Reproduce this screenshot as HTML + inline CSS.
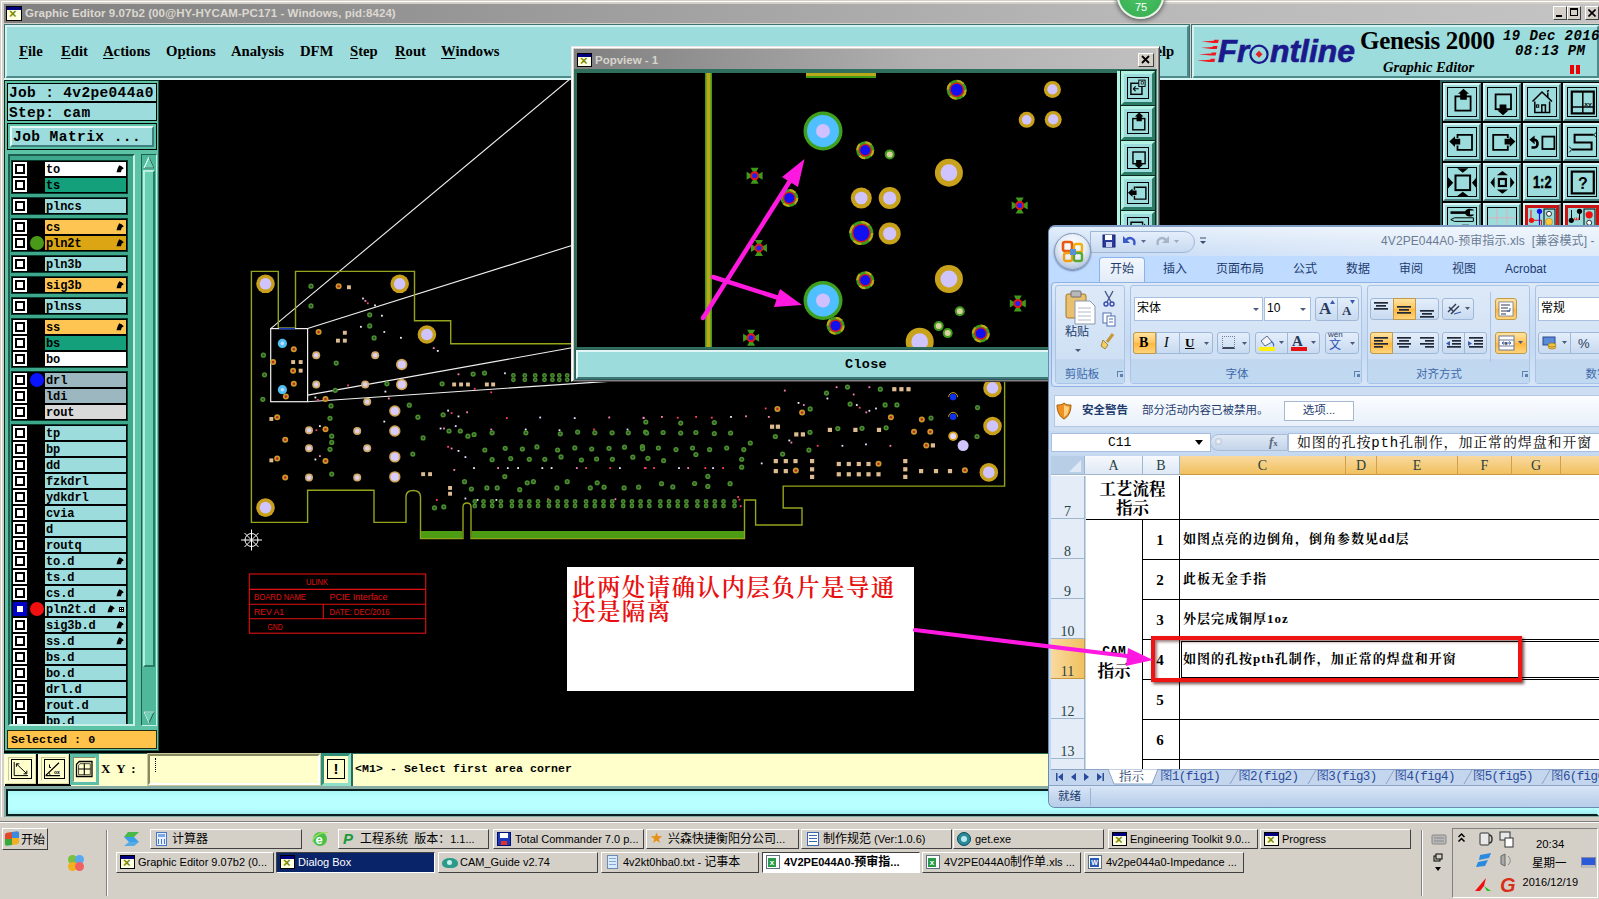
<!DOCTYPE html>
<html><head><meta charset="utf-8"><title>Graphic Editor</title>
<style>
*{box-sizing:border-box;margin:0;padding:0}
html,body{width:1599px;height:899px;overflow:hidden;background:#000}
body{position:relative;font-family:"Liberation Sans","Noto Sans CJK SC",sans-serif;font-size:11px;color:#000}
.a{position:absolute}
.mono{font-family:"Liberation Mono","DejaVu Sans Mono",monospace;font-weight:bold}
.serif{font-family:"Liberation Serif","Noto Serif CJK SC",serif}
.cy{background:#9ddcdc}
.out{border:1px solid;border-color:#e4f7f7 #3f6f6f #3f6f6f #e4f7f7}
.in{border:1px solid;border-color:#3f6f6f #e4f7f7 #e4f7f7 #3f6f6f}
.menu span{position:absolute;top:0.7px;font:bold 14.7px "Liberation Serif",serif;white-space:nowrap}
.menu u{text-decoration:underline;text-underline-offset:2px}
.lay{position:absolute;left:0;width:118px;height:16px}
.lay .cb{position:absolute;left:3px;top:3px;width:10px;height:10px;background:#fff;border:2px solid #000;box-shadow:0 0 0 2px #fff}
.lay .nm{position:absolute;left:33px;top:1px;padding-top:2px;width:81px;height:14px;font:bold 12px/12px "Liberation Mono",monospace;padding-left:1px;white-space:nowrap;overflow:hidden;letter-spacing:-0.1px}
.lay .hd{position:absolute;right:6px;top:4px;width:8px;height:8px}
.tb{position:absolute;height:20px;border:1px solid;border-color:#fff #404040 #404040 #fff;background:#d4d0c8;font:11px/18px "Liberation Sans","Noto Sans CJK SC",sans-serif;white-space:nowrap;overflow:hidden;padding-left:21px}
.tb i{position:absolute;left:3px;top:2px;width:15px;height:14px;display:block}
.gx{background:#ffffe1;border:1px solid #000}
.gx:before{content:"";position:absolute;left:0;top:0;right:0;height:3px;background:#000080}
.gx:after{content:"×";position:absolute;left:2px;top:1px;font:bold 13px/12px "Liberation Sans",sans-serif;color:#7a8a00}
</style></head><body>

<div class="a" style="left:0;top:0;width:1599px;height:822px;background:#d4d0c8"></div>
<div class="a" style="left:1px;top:1px;width:1598px;height:1px;background:#fff"></div><div class="a" style="left:1px;top:1px;width:1px;height:820px;background:#fff"></div>
<div class="a" style="left:4px;top:4px;width:1595px;height:19px;background:linear-gradient(90deg,#808080,#b8b8b8 70%,#c4c4c4)"></div>
<div class="a gx" style="left:6px;top:6px;width:16px;height:15px"></div>
<div class="a" id="ttl" style="left:25px;top:4px;font:bold 11.5px/18px 'Liberation Sans',sans-serif;color:#dcd8d0;white-space:nowrap;letter-spacing:0.05px">Graphic Editor 9.07b2 (00@HY-HYCAM-PC171 - Windows, pid:8424)</div>
<div class="a" style="left:1553px;top:6px;width:14px;height:14px;background:#d4d0c8;border:1px solid;border-color:#fff #404040 #404040 #fff"></div>
<div class="a" style="left:1567px;top:6px;width:14px;height:14px;background:#d4d0c8;border:1px solid;border-color:#fff #404040 #404040 #fff"></div>
<div class="a" style="left:1585px;top:6px;width:14px;height:14px;background:#d4d0c8;border:1px solid;border-color:#fff #404040 #404040 #fff"></div>
<div class="a" style="left:1556px;top:15px;width:6px;height:2px;background:#000"></div>
<div class="a" style="left:1570px;top:8px;width:8px;height:8px;border:1px solid #000;border-top-width:2px"></div>
<svg class="a" style="left:1588px;top:9px" width="8" height="8"><path d="M0.5 0.5L7.5 7.5M7.5 0.5L0.5 7.5" stroke="#000" stroke-width="1.6"/></svg>
<div class="a" style="left:1117px;top:-27px;width:47px;height:46px;border-radius:50%;background:radial-gradient(circle at 50% 40%,#4cc468,#36ac4e);border:2px solid #e8f4e8;box-shadow:0 1px 4px 1px #666"></div>
<div class="a" style="left:1131px;top:0px;width:20px;text-align:center;font:11px/14px 'Liberation Sans',sans-serif;color:#fff">75</div>
<div class="a" style="left:4px;top:24px;width:1186px;height:55px;background:#3f6f6f"></div>
<div class="a cy" style="left:5px;top:25px;width:1184px;height:54px;border:2px solid;border-color:#d4f2f2 #4f8a8a #4f8a8a #d4f2f2;border-bottom-width:3px"></div>
<div class="a menu" style="left:0;top:42px;width:1200px;height:20px">
<span style="left:19px"><u>F</u>ile</span>
<span style="left:61px"><u>E</u>dit</span>
<span style="left:103px"><u>A</u>ctions</span>
<span style="left:166px">O<u>p</u>tions</span>
<span style="left:231px">Analysis</span>
<span style="left:300px">DFM</span>
<span style="left:350px"><u>S</u>tep</span>
<span style="left:395px"><u>R</u>out</span>
<span style="left:441px"><u>W</u>indows</span>
<span style="left:1144px"><u>H</u>elp</span>
</div>
<div class="a" style="left:1191px;top:24px;width:408px;height:55px;background:#3f6f6f"></div>
<div class="a cy" style="left:1192px;top:25px;width:407px;height:54px;border:2px solid;border-color:#d4f2f2 #4f8a8a #4f8a8a #d4f2f2;border-bottom-width:3px"></div>
<svg class="a" style="left:1190px;top:30px" width="175" height="46" viewBox="1190 30 175 46"><path d="M1201.5 41.6L1213.8 40.7L1214.1 39.7L1218.8 39.7L1218.0 42.9L1213.2 42.9Z" fill="#f01820"/><path d="M1201.0 47.8L1212.6 46.9L1212.9 45.9L1217.6 45.9L1216.8 49.1L1212.0 49.1Z" fill="#f01820"/><path d="M1198.5 54.3L1211.4 53.4L1211.7 52.4L1216.4 52.4L1215.6 55.6L1210.8 55.6Z" fill="#f01820"/><path d="M1197.0 60.6L1210.2 59.7L1210.5 58.7L1215.2 58.7L1214.4 61.9L1209.6 61.9Z" fill="#f01820"/><text x="1218" y="62" font-family="Liberation Sans,sans-serif" font-weight="bold" font-style="italic" font-size="31.5" fill="#1a1a8c" stroke="#1a1a8c" stroke-width="0.7" lengthAdjust="spacingAndGlyphs" textLength="31">Fr</text><text x="1270" y="62" font-family="Liberation Sans,sans-serif" font-weight="bold" font-style="italic" font-size="31.5" fill="#1a1a8c" stroke="#1a1a8c" stroke-width="0.7" lengthAdjust="spacingAndGlyphs" textLength="85">ntline</text><circle cx="1259" cy="54.3" r="8.6" fill="none" stroke="#1a1a8c" stroke-width="2.2"/><path d="M1259 50.8L1262.5 54.3L1259 57.8L1255.5 54.3Z" fill="#e8202a"/></svg>
<div class="a" style="left:1360px;top:26px;font:bold 25px/30px 'Liberation Serif',serif;white-space:nowrap;letter-spacing:-0.3px">Genesis 2000</div>
<div class="a" style="left:1383px;top:58px;font:italic bold 14.6px/18px 'Liberation Serif',serif;white-space:nowrap">Graphic Editor</div>
<div class="a" style="left:1503px;top:29px;font:italic bold 14px/15px 'Liberation Mono',monospace;white-space:nowrap;letter-spacing:0.4px">19 Dec 2016</div>
<div class="a" style="left:1515px;top:44px;font:italic bold 14px/15px 'Liberation Mono',monospace;white-space:nowrap;letter-spacing:0.4px">08:13 PM</div>
<div class="a" style="left:1570px;top:65px;width:4px;height:9px;background:#e00"></div><div class="a" style="left:1576px;top:65px;width:4px;height:9px;background:#e00"></div>
<div class="a" style="left:4px;top:78px;width:1595px;height:2px;background:#d8f6f6"></div>
<div class="a" style="left:4px;top:80px;width:1595px;height:674px;background:#000"></div>
<svg class="a" style="left:158px;top:79px" width="1441" height="674" viewBox="158 79 1441 674"><path d="M270.7 328.6L576.0 74.0" stroke="#f0f0f0" stroke-width="1.1"/><path d="M307.6 328.6L1117.0 74.0" stroke="#f0f0f0" stroke-width="1.1"/><path d="M307.6 395.1L576.0 347.0" stroke="#f0f0f0" stroke-width="1.1"/><path d="M307.6 401.7L1117.0 347.0" stroke="#f0f0f0" stroke-width="1.1"/><path d="M251.4 271.4H278.3V328H295.5V271.4H414.5V320.7H450.7V343.8H1004.6V486.1H783.2V508H802V525H755.6V500H744.5V538.5H471V507Q471 503 467 503Q463 503 463 507V538.5H420.5V497Q420.5 490.5 413 490.5Q406 490.5 406 497V522.4H374V490.3H307.6V522.4H251.4Z" fill="none" stroke="#96a41c" stroke-width="1.4"/><rect x="421" y="531" width="41.5" height="7" fill="#4c9c14"/><rect x="471.5" y="531" width="272.5" height="7" fill="#4c9c14"/><circle cx="265.5" cy="283.8" r="9.3" fill="#c8a01c"/><circle cx="265.5" cy="283.8" r="5.8" fill="#d0c4ff"/><circle cx="399.7" cy="283.8" r="9.3" fill="#c8a01c"/><circle cx="399.7" cy="283.8" r="5.8" fill="#d0c4ff"/><circle cx="426.9" cy="334.5" r="9.3" fill="#c8a01c"/><circle cx="426.9" cy="334.5" r="5.8" fill="#d0c4ff"/><circle cx="265.5" cy="507.6" r="9.3" fill="#c8a01c"/><circle cx="265.5" cy="507.6" r="5.8" fill="#d0c4ff"/><circle cx="992.5" cy="387.9" r="9.3" fill="#c8a01c"/><circle cx="992.5" cy="387.9" r="5.8" fill="#d0c4ff"/><circle cx="992.5" cy="426.0" r="9.3" fill="#c8a01c"/><circle cx="992.5" cy="426.0" r="5.8" fill="#d0c4ff"/><circle cx="988.8" cy="472.4" r="9.3" fill="#c8a01c"/><circle cx="988.8" cy="472.4" r="5.8" fill="#d0c4ff"/><circle cx="401.7" cy="364.5" r="5.7" fill="#d0a450"/><circle cx="401.7" cy="364.5" r="4.1" fill="#d8ccff"/><circle cx="401.7" cy="384.5" r="5.7" fill="#d0a450"/><circle cx="401.7" cy="384.5" r="4.1" fill="#d8ccff"/><circle cx="394.8" cy="411.0" r="5.7" fill="#d0a450"/><circle cx="394.8" cy="411.0" r="4.1" fill="#d8ccff"/><circle cx="394.8" cy="431.0" r="5.7" fill="#d0a450"/><circle cx="394.8" cy="431.0" r="4.1" fill="#d8ccff"/><circle cx="394.8" cy="456.9" r="5.7" fill="#d0a450"/><circle cx="394.8" cy="456.9" r="4.1" fill="#d8ccff"/><circle cx="394.8" cy="476.9" r="5.7" fill="#d0a450"/><circle cx="394.8" cy="476.9" r="4.1" fill="#d8ccff"/><circle cx="316.2" cy="355.2" r="4.0" fill="#d0aa68"/><circle cx="316.2" cy="355.2" r="2.3" fill="#dcd0f0"/><circle cx="375.2" cy="355.2" r="4.0" fill="#d0aa68"/><circle cx="375.2" cy="355.2" r="2.3" fill="#dcd0f0"/><circle cx="316.2" cy="384.5" r="4.0" fill="#d0aa68"/><circle cx="316.2" cy="384.5" r="2.3" fill="#dcd0f0"/><circle cx="365.2" cy="384.5" r="4.0" fill="#d0aa68"/><circle cx="365.2" cy="384.5" r="2.3" fill="#dcd0f0"/><circle cx="309.0" cy="430.3" r="4.0" fill="#d0aa68"/><circle cx="309.0" cy="430.3" r="2.3" fill="#dcd0f0"/><circle cx="357.2" cy="431.0" r="4.0" fill="#d0aa68"/><circle cx="357.2" cy="431.0" r="2.3" fill="#dcd0f0"/><circle cx="309.0" cy="448.3" r="4.0" fill="#d0aa68"/><circle cx="309.0" cy="448.3" r="2.3" fill="#dcd0f0"/><circle cx="367.2" cy="448.3" r="4.0" fill="#d0aa68"/><circle cx="367.2" cy="448.3" r="2.3" fill="#dcd0f0"/><circle cx="309.0" cy="477.6" r="4.0" fill="#d0aa68"/><circle cx="309.0" cy="477.6" r="2.3" fill="#dcd0f0"/><circle cx="357.2" cy="477.6" r="4.0" fill="#d0aa68"/><circle cx="357.2" cy="477.6" r="2.3" fill="#dcd0f0"/><circle cx="367.2" cy="401.7" r="4.0" fill="#d0aa68"/><circle cx="367.2" cy="401.7" r="2.3" fill="#dcd0f0"/><circle cx="953.1" cy="436.2" r="4.0" fill="#d0aa68"/><circle cx="953.1" cy="436.2" r="2.3" fill="#dcd0f0"/><circle cx="963.1" cy="445.6" r="5.5" fill="#d0c4ff"/><rect x="270.7" y="328.6" width="36.9" height="73.1" fill="none" stroke="#f0f0f0" stroke-width="1.2"/><path d="M279 328.6H295" stroke="#1a3ac0" stroke-width="1.5"/><circle cx="282.4" cy="343.4" r="4.6" fill="#4fc0f0"/><circle cx="282.4" cy="343.4" r="1.8" fill="#c8d8ff"/><circle cx="282.4" cy="389.7" r="4.6" fill="#4fc0f0"/><circle cx="282.4" cy="389.7" r="1.8" fill="#c8d8ff"/><circle cx="311.0" cy="286.2" r="2.6" fill="#4a8f2a"/><circle cx="311.0" cy="286.2" r="1.1" fill="#2a4a30"/><circle cx="311.0" cy="305.9" r="2.6" fill="#4a8f2a"/><circle cx="311.0" cy="305.9" r="1.1" fill="#2a4a30"/><circle cx="369.7" cy="314.8" r="2.6" fill="#4a8f2a"/><circle cx="369.7" cy="314.8" r="1.1" fill="#2a4a30"/><circle cx="369.7" cy="325.9" r="2.6" fill="#4a8f2a"/><circle cx="369.7" cy="325.9" r="1.1" fill="#2a4a30"/><circle cx="374.1" cy="337.9" r="2.6" fill="#4a8f2a"/><circle cx="374.1" cy="337.9" r="1.1" fill="#2a4a30"/><circle cx="336.2" cy="363.1" r="2.6" fill="#4a8f2a"/><circle cx="336.2" cy="363.1" r="1.1" fill="#2a4a30"/><circle cx="263.4" cy="355.2" r="2.6" fill="#4a8f2a"/><circle cx="263.4" cy="355.2" r="1.1" fill="#2a4a30"/><circle cx="264.5" cy="374.8" r="2.6" fill="#4a8f2a"/><circle cx="264.5" cy="374.8" r="1.1" fill="#2a4a30"/><circle cx="262.8" cy="399.3" r="2.6" fill="#4a8f2a"/><circle cx="262.8" cy="399.3" r="1.1" fill="#2a4a30"/><circle cx="335.2" cy="390.3" r="2.6" fill="#4a8f2a"/><circle cx="335.2" cy="390.3" r="1.1" fill="#2a4a30"/><circle cx="331.0" cy="405.9" r="2.6" fill="#4a8f2a"/><circle cx="331.0" cy="405.9" r="1.1" fill="#2a4a30"/><circle cx="330.0" cy="418.3" r="2.6" fill="#4a8f2a"/><circle cx="330.0" cy="418.3" r="1.1" fill="#2a4a30"/><circle cx="331.7" cy="436.2" r="2.6" fill="#4a8f2a"/><circle cx="331.7" cy="436.2" r="1.1" fill="#2a4a30"/><circle cx="331.7" cy="442.4" r="2.6" fill="#4a8f2a"/><circle cx="331.7" cy="442.4" r="1.1" fill="#2a4a30"/><circle cx="330.0" cy="449.3" r="2.6" fill="#4a8f2a"/><circle cx="330.0" cy="449.3" r="1.1" fill="#2a4a30"/><circle cx="331.7" cy="474.1" r="2.6" fill="#4a8f2a"/><circle cx="331.7" cy="474.1" r="1.1" fill="#2a4a30"/><circle cx="386.9" cy="383.8" r="2.6" fill="#4a8f2a"/><circle cx="386.9" cy="383.8" r="1.1" fill="#2a4a30"/><circle cx="409.3" cy="405.2" r="2.6" fill="#4a8f2a"/><circle cx="409.3" cy="405.2" r="1.1" fill="#2a4a30"/><circle cx="417.9" cy="417.2" r="2.6" fill="#4a8f2a"/><circle cx="417.9" cy="417.2" r="1.1" fill="#2a4a30"/><circle cx="423.1" cy="437.9" r="2.6" fill="#4a8f2a"/><circle cx="423.1" cy="437.9" r="1.1" fill="#2a4a30"/><circle cx="412.8" cy="454.1" r="2.6" fill="#4a8f2a"/><circle cx="412.8" cy="454.1" r="1.1" fill="#2a4a30"/><circle cx="442.1" cy="383.8" r="2.6" fill="#4a8f2a"/><circle cx="442.1" cy="383.8" r="1.1" fill="#2a4a30"/><circle cx="443.1" cy="414.8" r="2.6" fill="#4a8f2a"/><circle cx="443.1" cy="414.8" r="1.1" fill="#2a4a30"/><circle cx="449.0" cy="431.0" r="2.6" fill="#4a8f2a"/><circle cx="449.0" cy="431.0" r="1.1" fill="#2a4a30"/><circle cx="460.3" cy="431.0" r="2.6" fill="#4a8f2a"/><circle cx="460.3" cy="431.0" r="1.1" fill="#2a4a30"/><circle cx="467.9" cy="436.2" r="2.6" fill="#4a8f2a"/><circle cx="467.9" cy="436.2" r="1.1" fill="#2a4a30"/><circle cx="474.1" cy="434.5" r="2.6" fill="#4a8f2a"/><circle cx="474.1" cy="434.5" r="1.1" fill="#2a4a30"/><circle cx="473.1" cy="374.1" r="2.6" fill="#4a8f2a"/><circle cx="473.1" cy="374.1" r="1.1" fill="#2a4a30"/><circle cx="484.5" cy="373.1" r="2.6" fill="#4a8f2a"/><circle cx="484.5" cy="373.1" r="1.1" fill="#2a4a30"/><circle cx="464.5" cy="481.7" r="2.6" fill="#4a8f2a"/><circle cx="464.5" cy="481.7" r="1.1" fill="#2a4a30"/><circle cx="471.4" cy="489.0" r="2.6" fill="#4a8f2a"/><circle cx="471.4" cy="489.0" r="1.1" fill="#2a4a30"/><circle cx="486.9" cy="487.9" r="2.6" fill="#4a8f2a"/><circle cx="486.9" cy="487.9" r="1.1" fill="#2a4a30"/><circle cx="497.2" cy="487.9" r="2.6" fill="#4a8f2a"/><circle cx="497.2" cy="487.9" r="1.1" fill="#2a4a30"/><circle cx="504.8" cy="476.6" r="2.6" fill="#4a8f2a"/><circle cx="504.8" cy="476.6" r="1.1" fill="#2a4a30"/><circle cx="434.5" cy="507.9" r="2.6" fill="#4a8f2a"/><circle cx="434.5" cy="507.9" r="1.1" fill="#2a4a30"/><circle cx="443.8" cy="506.9" r="2.6" fill="#4a8f2a"/><circle cx="443.8" cy="506.9" r="1.1" fill="#2a4a30"/><circle cx="338.6" cy="286.2" r="3" fill="#c89a28"/><circle cx="338.6" cy="286.2" r="1.3" fill="#c02828"/><circle cx="318.6" cy="332.1" r="3" fill="#c89a28"/><circle cx="318.6" cy="332.1" r="1.3" fill="#c02828"/><circle cx="293.8" cy="349.3" r="3" fill="#c89a28"/><circle cx="293.8" cy="349.3" r="1.3" fill="#c02828"/><circle cx="273.1" cy="362.1" r="3" fill="#c89a28"/><circle cx="273.1" cy="362.1" r="1.3" fill="#c02828"/><circle cx="293.1" cy="370.7" r="3" fill="#c89a28"/><circle cx="293.1" cy="370.7" r="1.3" fill="#c02828"/><circle cx="293.8" cy="383.8" r="3" fill="#c89a28"/><circle cx="293.8" cy="383.8" r="1.3" fill="#c02828"/><circle cx="285.9" cy="396.6" r="3" fill="#c89a28"/><circle cx="285.9" cy="396.6" r="1.3" fill="#c02828"/><circle cx="277.2" cy="417.2" r="3" fill="#c89a28"/><circle cx="277.2" cy="417.2" r="1.3" fill="#c02828"/><circle cx="325.5" cy="399.0" r="3" fill="#c89a28"/><circle cx="325.5" cy="399.0" r="1.3" fill="#c02828"/><circle cx="325.5" cy="429.3" r="3" fill="#c89a28"/><circle cx="325.5" cy="429.3" r="1.3" fill="#c02828"/><circle cx="285.2" cy="439.7" r="3" fill="#c89a28"/><circle cx="285.2" cy="439.7" r="1.3" fill="#c02828"/><circle cx="277.2" cy="458.6" r="3" fill="#c89a28"/><circle cx="277.2" cy="458.6" r="1.3" fill="#c02828"/><circle cx="325.5" cy="461.0" r="3" fill="#c89a28"/><circle cx="325.5" cy="461.0" r="1.3" fill="#c02828"/><circle cx="285.2" cy="477.6" r="3" fill="#c89a28"/><circle cx="285.2" cy="477.6" r="1.3" fill="#c02828"/><rect x="347.0" y="285.3" width="3.9" height="3.9" fill="#dcbc90"/><rect x="342.9" y="330.8" width="3.9" height="3.9" fill="#dcbc90"/><rect x="336.0" y="338.7" width="3.9" height="3.9" fill="#dcbc90"/><rect x="342.9" y="338.7" width="3.9" height="3.9" fill="#dcbc90"/><rect x="291.2" y="360.1" width="3.9" height="3.9" fill="#dcbc90"/><rect x="298.7" y="360.1" width="3.9" height="3.9" fill="#dcbc90"/><rect x="298.7" y="368.7" width="3.9" height="3.9" fill="#dcbc90"/><rect x="269.4" y="417.0" width="3.9" height="3.9" fill="#dcbc90"/><rect x="269.4" y="458.4" width="3.9" height="3.9" fill="#dcbc90"/><rect x="421.2" y="472.2" width="3.9" height="3.9" fill="#dcbc90"/><rect x="428.1" y="472.2" width="3.9" height="3.9" fill="#dcbc90"/><rect x="448.1" y="486.0" width="3.9" height="3.9" fill="#dcbc90"/><rect x="448.1" y="491.8" width="3.9" height="3.9" fill="#dcbc90"/><rect x="452.2" y="382.5" width="3.9" height="3.9" fill="#dcbc90"/><rect x="459.1" y="382.5" width="3.9" height="3.9" fill="#dcbc90"/><rect x="466.0" y="382.5" width="3.9" height="3.9" fill="#dcbc90"/><rect x="484.9" y="382.5" width="3.9" height="3.9" fill="#dcbc90"/><rect x="491.2" y="382.5" width="3.9" height="3.9" fill="#dcbc90"/><rect x="362.1" y="297.6" width="1.8" height="1.8" fill="#e0e0ff"/><rect x="364.5" y="300.0" width="1.8" height="1.8" fill="#ff80c0"/><rect x="366.9" y="302.4" width="1.8" height="1.8" fill="#ff4060"/><rect x="374.1" y="304.5" width="1.8" height="1.8" fill="#f0f0ff"/><rect x="381.0" y="314.8" width="1.8" height="1.8" fill="#f0f0ff"/><rect x="360.0" y="325.9" width="1.8" height="1.8" fill="#f0f0ff"/><rect x="383.4" y="331.0" width="1.8" height="1.8" fill="#e0e0ff"/><rect x="400.0" y="336.9" width="1.8" height="1.8" fill="#f0f0ff"/><rect x="432.8" y="347.2" width="1.8" height="1.8" fill="#ff80c0"/><rect x="436.9" y="350.0" width="1.8" height="1.8" fill="#f0f0ff"/><rect x="314.5" y="396.6" width="1.8" height="1.8" fill="#f0f0ff"/><rect x="316.9" y="399.0" width="1.8" height="1.8" fill="#ff4060"/><rect x="347.2" y="384.5" width="1.8" height="1.8" fill="#ff4060"/><rect x="384.5" y="390.7" width="1.8" height="1.8" fill="#f0f0ff"/><rect x="387.9" y="397.6" width="1.8" height="1.8" fill="#ff80c0"/><rect x="383.4" y="420.7" width="1.8" height="1.8" fill="#f0f0ff"/><rect x="315.5" y="429.3" width="1.8" height="1.8" fill="#ff4060"/><rect x="319.0" y="425.2" width="1.8" height="1.8" fill="#f0f0ff"/><rect x="314.5" y="458.6" width="1.8" height="1.8" fill="#f0f0ff"/><rect x="319.0" y="455.2" width="1.8" height="1.8" fill="#ff80c0"/><rect x="447.2" y="409.7" width="1.8" height="1.8" fill="#f0f0ff"/><rect x="450.7" y="412.1" width="1.8" height="1.8" fill="#ff4060"/><rect x="457.6" y="415.5" width="1.8" height="1.8" fill="#f0f0ff"/><rect x="466.2" y="411.4" width="1.8" height="1.8" fill="#ff80c0"/><rect x="439.7" y="427.6" width="1.8" height="1.8" fill="#f0f0ff"/><rect x="443.1" y="427.6" width="1.8" height="1.8" fill="#ff80c0"/><rect x="454.8" y="425.2" width="1.8" height="1.8" fill="#e0e0ff"/><rect x="447.2" y="445.9" width="1.8" height="1.8" fill="#ff4060"/><rect x="450.7" y="447.6" width="1.8" height="1.8" fill="#ff80c0"/><rect x="457.6" y="450.0" width="1.8" height="1.8" fill="#f0f0ff"/><rect x="464.5" y="456.2" width="1.8" height="1.8" fill="#e0e0ff"/><rect x="453.4" y="469.0" width="1.8" height="1.8" fill="#ff80c0"/><rect x="473.1" y="467.2" width="1.8" height="1.8" fill="#f0f0ff"/><rect x="497.2" y="467.2" width="1.8" height="1.8" fill="#ff80c0"/><rect x="506.9" y="467.2" width="1.8" height="1.8" fill="#e0e0ff"/><rect x="517.2" y="467.2" width="1.8" height="1.8" fill="#f0f0ff"/><rect x="541.4" y="467.2" width="1.8" height="1.8" fill="#f0f0ff"/><rect x="550.7" y="467.2" width="1.8" height="1.8" fill="#f0f0ff"/><rect x="575.9" y="467.2" width="1.8" height="1.8" fill="#ff80c0"/><rect x="585.2" y="467.2" width="1.8" height="1.8" fill="#ff4060"/><rect x="609.3" y="467.2" width="1.8" height="1.8" fill="#ff4060"/><rect x="619.0" y="467.2" width="1.8" height="1.8" fill="#e0e0ff"/><rect x="644.8" y="467.2" width="1.8" height="1.8" fill="#ff4060"/><rect x="505.9" y="417.2" width="1.8" height="1.8" fill="#ff4060"/><rect x="539.3" y="416.6" width="1.8" height="1.8" fill="#e0e0ff"/><rect x="573.8" y="417.2" width="1.8" height="1.8" fill="#e0e0ff"/><rect x="608.3" y="416.6" width="1.8" height="1.8" fill="#ff80c0"/><rect x="642.8" y="417.2" width="1.8" height="1.8" fill="#ff80c0"/><rect x="490.3" y="428.6" width="1.8" height="1.8" fill="#ff80c0"/><rect x="524.8" y="428.6" width="1.8" height="1.8" fill="#f0f0ff"/><rect x="558.6" y="429.3" width="1.8" height="1.8" fill="#e0e0ff"/><rect x="593.1" y="428.6" width="1.8" height="1.8" fill="#ff4060"/><rect x="626.6" y="428.6" width="1.8" height="1.8" fill="#e0e0ff"/><rect x="435.9" y="499.0" width="1.8" height="1.8" fill="#ff4060"/><rect x="464.5" y="497.6" width="1.8" height="1.8" fill="#e0e0ff"/><rect x="476.6" y="499.0" width="1.8" height="1.8" fill="#f0f0ff"/><rect x="495.5" y="499.0" width="1.8" height="1.8" fill="#f0f0ff"/><rect x="547.2" y="498.3" width="1.8" height="1.8" fill="#ff4060"/><rect x="614.5" y="498.3" width="1.8" height="1.8" fill="#ff80c0"/><rect x="504.1" y="372.4" width="1.8" height="1.8" fill="#e0e0ff"/><rect x="457.6" y="373.4" width="1.8" height="1.8" fill="#ff80c0"/><rect x="473.8" y="387.9" width="1.8" height="1.8" fill="#ff4060"/><rect x="490.3" y="391.4" width="1.8" height="1.8" fill="#ff4060"/><circle cx="484.8" cy="450.0" r="2.6" fill="#4a8f2a"/><circle cx="484.8" cy="450.0" r="1.1" fill="#2a4a30"/><circle cx="492.1" cy="459.7" r="2.6" fill="#4a8f2a"/><circle cx="492.1" cy="459.7" r="1.1" fill="#2a4a30"/><circle cx="505.2" cy="448.3" r="2.6" fill="#4a8f2a"/><circle cx="505.2" cy="448.3" r="1.1" fill="#2a4a30"/><circle cx="510.7" cy="458.6" r="2.6" fill="#4a8f2a"/><circle cx="510.7" cy="458.6" r="1.1" fill="#2a4a30"/><circle cx="522.4" cy="449.0" r="2.6" fill="#4a8f2a"/><circle cx="522.4" cy="449.0" r="1.1" fill="#2a4a30"/><circle cx="529.3" cy="459.3" r="2.6" fill="#4a8f2a"/><circle cx="529.3" cy="459.3" r="1.1" fill="#2a4a30"/><circle cx="536.9" cy="446.9" r="2.6" fill="#4a8f2a"/><circle cx="536.9" cy="446.9" r="1.1" fill="#2a4a30"/><circle cx="544.8" cy="459.3" r="2.6" fill="#4a8f2a"/><circle cx="544.8" cy="459.3" r="1.1" fill="#2a4a30"/><circle cx="557.6" cy="450.0" r="2.6" fill="#4a8f2a"/><circle cx="557.6" cy="450.0" r="1.1" fill="#2a4a30"/><circle cx="561.0" cy="456.9" r="2.6" fill="#4a8f2a"/><circle cx="561.0" cy="456.9" r="1.1" fill="#2a4a30"/><circle cx="574.8" cy="447.9" r="2.6" fill="#4a8f2a"/><circle cx="574.8" cy="447.9" r="1.1" fill="#2a4a30"/><circle cx="581.4" cy="460.0" r="2.6" fill="#4a8f2a"/><circle cx="581.4" cy="460.0" r="1.1" fill="#2a4a30"/><circle cx="591.7" cy="449.0" r="2.6" fill="#4a8f2a"/><circle cx="591.7" cy="449.0" r="1.1" fill="#2a4a30"/><circle cx="596.6" cy="459.0" r="2.6" fill="#4a8f2a"/><circle cx="596.6" cy="459.0" r="1.1" fill="#2a4a30"/><circle cx="609.0" cy="448.3" r="2.6" fill="#4a8f2a"/><circle cx="609.0" cy="448.3" r="1.1" fill="#2a4a30"/><circle cx="612.4" cy="459.3" r="2.6" fill="#4a8f2a"/><circle cx="612.4" cy="459.3" r="1.1" fill="#2a4a30"/><circle cx="624.5" cy="447.2" r="2.6" fill="#4a8f2a"/><circle cx="624.5" cy="447.2" r="1.1" fill="#2a4a30"/><circle cx="632.8" cy="457.2" r="2.6" fill="#4a8f2a"/><circle cx="632.8" cy="457.2" r="1.1" fill="#2a4a30"/><circle cx="642.4" cy="446.6" r="2.6" fill="#4a8f2a"/><circle cx="642.4" cy="446.6" r="1.1" fill="#2a4a30"/><circle cx="647.9" cy="458.3" r="2.6" fill="#4a8f2a"/><circle cx="647.9" cy="458.3" r="1.1" fill="#2a4a30"/><circle cx="492.1" cy="432.8" r="2.6" fill="#4a8f2a"/><circle cx="492.1" cy="432.8" r="1.1" fill="#2a4a30"/><circle cx="525.9" cy="432.8" r="2.6" fill="#4a8f2a"/><circle cx="525.9" cy="432.8" r="1.1" fill="#2a4a30"/><circle cx="560.3" cy="433.8" r="2.6" fill="#4a8f2a"/><circle cx="560.3" cy="433.8" r="1.1" fill="#2a4a30"/><circle cx="577.6" cy="432.1" r="2.6" fill="#4a8f2a"/><circle cx="577.6" cy="432.1" r="1.1" fill="#2a4a30"/><circle cx="594.8" cy="432.8" r="2.6" fill="#4a8f2a"/><circle cx="594.8" cy="432.8" r="1.1" fill="#2a4a30"/><circle cx="612.1" cy="432.8" r="2.6" fill="#4a8f2a"/><circle cx="612.1" cy="432.8" r="1.1" fill="#2a4a30"/><circle cx="628.3" cy="432.8" r="2.6" fill="#4a8f2a"/><circle cx="628.3" cy="432.8" r="1.1" fill="#2a4a30"/><circle cx="645.5" cy="432.1" r="2.6" fill="#4a8f2a"/><circle cx="645.5" cy="432.1" r="1.1" fill="#2a4a30"/><circle cx="519.7" cy="489.7" r="2.6" fill="#4a8f2a"/><circle cx="519.7" cy="489.7" r="1.1" fill="#2a4a30"/><circle cx="527.2" cy="482.8" r="2.6" fill="#4a8f2a"/><circle cx="527.2" cy="482.8" r="1.1" fill="#2a4a30"/><circle cx="533.4" cy="481.7" r="2.6" fill="#4a8f2a"/><circle cx="533.4" cy="481.7" r="1.1" fill="#2a4a30"/><circle cx="556.9" cy="487.9" r="2.6" fill="#4a8f2a"/><circle cx="556.9" cy="487.9" r="1.1" fill="#2a4a30"/><circle cx="567.2" cy="481.7" r="2.6" fill="#4a8f2a"/><circle cx="567.2" cy="481.7" r="1.1" fill="#2a4a30"/><circle cx="590.3" cy="487.9" r="2.6" fill="#4a8f2a"/><circle cx="590.3" cy="487.9" r="1.1" fill="#2a4a30"/><circle cx="597.2" cy="482.8" r="2.6" fill="#4a8f2a"/><circle cx="597.2" cy="482.8" r="1.1" fill="#2a4a30"/><circle cx="604.1" cy="487.2" r="2.6" fill="#4a8f2a"/><circle cx="604.1" cy="487.2" r="1.1" fill="#2a4a30"/><circle cx="624.1" cy="487.9" r="2.6" fill="#4a8f2a"/><circle cx="624.1" cy="487.9" r="1.1" fill="#2a4a30"/><circle cx="638.6" cy="487.2" r="2.6" fill="#4a8f2a"/><circle cx="638.6" cy="487.2" r="1.1" fill="#2a4a30"/><circle cx="513.4" cy="375.4" r="2.4" fill="#4a8f2a"/><circle cx="513.4" cy="375.4" r="1.0" fill="#2a4a30"/><circle cx="513.4" cy="379.8" r="2.4" fill="#4a8f2a"/><circle cx="513.4" cy="379.8" r="1.0" fill="#2a4a30"/><circle cx="524.8" cy="375.4" r="2.4" fill="#4a8f2a"/><circle cx="524.8" cy="375.4" r="1.0" fill="#2a4a30"/><circle cx="524.8" cy="379.8" r="2.4" fill="#4a8f2a"/><circle cx="524.8" cy="379.8" r="1.0" fill="#2a4a30"/><circle cx="535.2" cy="375.4" r="2.4" fill="#4a8f2a"/><circle cx="535.2" cy="375.4" r="1.0" fill="#2a4a30"/><circle cx="535.2" cy="379.8" r="2.4" fill="#4a8f2a"/><circle cx="535.2" cy="379.8" r="1.0" fill="#2a4a30"/><circle cx="544.5" cy="375.4" r="2.4" fill="#4a8f2a"/><circle cx="544.5" cy="375.4" r="1.0" fill="#2a4a30"/><circle cx="544.5" cy="379.8" r="2.4" fill="#4a8f2a"/><circle cx="544.5" cy="379.8" r="1.0" fill="#2a4a30"/><circle cx="552.4" cy="375.4" r="2.4" fill="#4a8f2a"/><circle cx="552.4" cy="375.4" r="1.0" fill="#2a4a30"/><circle cx="552.4" cy="379.8" r="2.4" fill="#4a8f2a"/><circle cx="552.4" cy="379.8" r="1.0" fill="#2a4a30"/><circle cx="559.3" cy="375.4" r="2.4" fill="#4a8f2a"/><circle cx="559.3" cy="375.4" r="1.0" fill="#2a4a30"/><circle cx="559.3" cy="379.8" r="2.4" fill="#4a8f2a"/><circle cx="559.3" cy="379.8" r="1.0" fill="#2a4a30"/><circle cx="567.2" cy="375.4" r="2.4" fill="#4a8f2a"/><circle cx="567.2" cy="375.4" r="1.0" fill="#2a4a30"/><circle cx="567.2" cy="379.8" r="2.4" fill="#4a8f2a"/><circle cx="567.2" cy="379.8" r="1.0" fill="#2a4a30"/><circle cx="474.8" cy="501.5" r="2.4" fill="#4a8f2a"/><circle cx="474.8" cy="501.5" r="1.0" fill="#2a4a30"/><circle cx="474.8" cy="506.0" r="2.4" fill="#4a8f2a"/><circle cx="474.8" cy="506.0" r="1.0" fill="#2a4a30"/><circle cx="483.5" cy="501.5" r="2.4" fill="#4a8f2a"/><circle cx="483.5" cy="501.5" r="1.0" fill="#2a4a30"/><circle cx="483.5" cy="506.0" r="2.4" fill="#4a8f2a"/><circle cx="483.5" cy="506.0" r="1.0" fill="#2a4a30"/><circle cx="492.2" cy="501.5" r="2.4" fill="#4a8f2a"/><circle cx="492.2" cy="501.5" r="1.0" fill="#2a4a30"/><circle cx="492.2" cy="506.0" r="2.4" fill="#4a8f2a"/><circle cx="492.2" cy="506.0" r="1.0" fill="#2a4a30"/><circle cx="500.9" cy="501.5" r="2.4" fill="#4a8f2a"/><circle cx="500.9" cy="501.5" r="1.0" fill="#2a4a30"/><circle cx="500.9" cy="506.0" r="2.4" fill="#4a8f2a"/><circle cx="500.9" cy="506.0" r="1.0" fill="#2a4a30"/><circle cx="511.9" cy="501.5" r="2.4" fill="#4a8f2a"/><circle cx="511.9" cy="501.5" r="1.0" fill="#2a4a30"/><circle cx="511.9" cy="506.0" r="2.4" fill="#4a8f2a"/><circle cx="511.9" cy="506.0" r="1.0" fill="#2a4a30"/><circle cx="520.6" cy="501.5" r="2.4" fill="#4a8f2a"/><circle cx="520.6" cy="501.5" r="1.0" fill="#2a4a30"/><circle cx="520.6" cy="506.0" r="2.4" fill="#4a8f2a"/><circle cx="520.6" cy="506.0" r="1.0" fill="#2a4a30"/><circle cx="529.3" cy="501.5" r="2.4" fill="#4a8f2a"/><circle cx="529.3" cy="501.5" r="1.0" fill="#2a4a30"/><circle cx="529.3" cy="506.0" r="2.4" fill="#4a8f2a"/><circle cx="529.3" cy="506.0" r="1.0" fill="#2a4a30"/><circle cx="538.0" cy="501.5" r="2.4" fill="#4a8f2a"/><circle cx="538.0" cy="501.5" r="1.0" fill="#2a4a30"/><circle cx="538.0" cy="506.0" r="2.4" fill="#4a8f2a"/><circle cx="538.0" cy="506.0" r="1.0" fill="#2a4a30"/><circle cx="549.0" cy="501.5" r="2.4" fill="#4a8f2a"/><circle cx="549.0" cy="501.5" r="1.0" fill="#2a4a30"/><circle cx="549.0" cy="506.0" r="2.4" fill="#4a8f2a"/><circle cx="549.0" cy="506.0" r="1.0" fill="#2a4a30"/><circle cx="557.7" cy="501.5" r="2.4" fill="#4a8f2a"/><circle cx="557.7" cy="501.5" r="1.0" fill="#2a4a30"/><circle cx="557.7" cy="506.0" r="2.4" fill="#4a8f2a"/><circle cx="557.7" cy="506.0" r="1.0" fill="#2a4a30"/><circle cx="566.4" cy="501.5" r="2.4" fill="#4a8f2a"/><circle cx="566.4" cy="501.5" r="1.0" fill="#2a4a30"/><circle cx="566.4" cy="506.0" r="2.4" fill="#4a8f2a"/><circle cx="566.4" cy="506.0" r="1.0" fill="#2a4a30"/><circle cx="575.1" cy="501.5" r="2.4" fill="#4a8f2a"/><circle cx="575.1" cy="501.5" r="1.0" fill="#2a4a30"/><circle cx="575.1" cy="506.0" r="2.4" fill="#4a8f2a"/><circle cx="575.1" cy="506.0" r="1.0" fill="#2a4a30"/><circle cx="586.1" cy="501.5" r="2.4" fill="#4a8f2a"/><circle cx="586.1" cy="501.5" r="1.0" fill="#2a4a30"/><circle cx="586.1" cy="506.0" r="2.4" fill="#4a8f2a"/><circle cx="586.1" cy="506.0" r="1.0" fill="#2a4a30"/><circle cx="594.8" cy="501.5" r="2.4" fill="#4a8f2a"/><circle cx="594.8" cy="501.5" r="1.0" fill="#2a4a30"/><circle cx="594.8" cy="506.0" r="2.4" fill="#4a8f2a"/><circle cx="594.8" cy="506.0" r="1.0" fill="#2a4a30"/><circle cx="603.5" cy="501.5" r="2.4" fill="#4a8f2a"/><circle cx="603.5" cy="501.5" r="1.0" fill="#2a4a30"/><circle cx="603.5" cy="506.0" r="2.4" fill="#4a8f2a"/><circle cx="603.5" cy="506.0" r="1.0" fill="#2a4a30"/><circle cx="612.2" cy="501.5" r="2.4" fill="#4a8f2a"/><circle cx="612.2" cy="501.5" r="1.0" fill="#2a4a30"/><circle cx="612.2" cy="506.0" r="2.4" fill="#4a8f2a"/><circle cx="612.2" cy="506.0" r="1.0" fill="#2a4a30"/><circle cx="623.2" cy="501.5" r="2.4" fill="#4a8f2a"/><circle cx="623.2" cy="501.5" r="1.0" fill="#2a4a30"/><circle cx="623.2" cy="506.0" r="2.4" fill="#4a8f2a"/><circle cx="623.2" cy="506.0" r="1.0" fill="#2a4a30"/><circle cx="631.9" cy="501.5" r="2.4" fill="#4a8f2a"/><circle cx="631.9" cy="501.5" r="1.0" fill="#2a4a30"/><circle cx="631.9" cy="506.0" r="2.4" fill="#4a8f2a"/><circle cx="631.9" cy="506.0" r="1.0" fill="#2a4a30"/><circle cx="640.6" cy="501.5" r="2.4" fill="#4a8f2a"/><circle cx="640.6" cy="501.5" r="1.0" fill="#2a4a30"/><circle cx="640.6" cy="506.0" r="2.4" fill="#4a8f2a"/><circle cx="640.6" cy="506.0" r="1.0" fill="#2a4a30"/><circle cx="649.3" cy="501.5" r="2.4" fill="#4a8f2a"/><circle cx="649.3" cy="501.5" r="1.0" fill="#2a4a30"/><circle cx="649.3" cy="506.0" r="2.4" fill="#4a8f2a"/><circle cx="649.3" cy="506.0" r="1.0" fill="#2a4a30"/><circle cx="660.3" cy="501.5" r="2.4" fill="#4a8f2a"/><circle cx="660.3" cy="501.5" r="1.0" fill="#2a4a30"/><circle cx="660.3" cy="506.0" r="2.4" fill="#4a8f2a"/><circle cx="660.3" cy="506.0" r="1.0" fill="#2a4a30"/><circle cx="669.0" cy="501.5" r="2.4" fill="#4a8f2a"/><circle cx="669.0" cy="501.5" r="1.0" fill="#2a4a30"/><circle cx="669.0" cy="506.0" r="2.4" fill="#4a8f2a"/><circle cx="669.0" cy="506.0" r="1.0" fill="#2a4a30"/><circle cx="677.7" cy="501.5" r="2.4" fill="#4a8f2a"/><circle cx="677.7" cy="501.5" r="1.0" fill="#2a4a30"/><circle cx="677.7" cy="506.0" r="2.4" fill="#4a8f2a"/><circle cx="677.7" cy="506.0" r="1.0" fill="#2a4a30"/><circle cx="686.4" cy="501.5" r="2.4" fill="#4a8f2a"/><circle cx="686.4" cy="501.5" r="1.0" fill="#2a4a30"/><circle cx="686.4" cy="506.0" r="2.4" fill="#4a8f2a"/><circle cx="686.4" cy="506.0" r="1.0" fill="#2a4a30"/><circle cx="697.4" cy="501.5" r="2.4" fill="#4a8f2a"/><circle cx="697.4" cy="501.5" r="1.0" fill="#2a4a30"/><circle cx="697.4" cy="506.0" r="2.4" fill="#4a8f2a"/><circle cx="697.4" cy="506.0" r="1.0" fill="#2a4a30"/><circle cx="706.1" cy="501.5" r="2.4" fill="#4a8f2a"/><circle cx="706.1" cy="501.5" r="1.0" fill="#2a4a30"/><circle cx="706.1" cy="506.0" r="2.4" fill="#4a8f2a"/><circle cx="706.1" cy="506.0" r="1.0" fill="#2a4a30"/><circle cx="714.8" cy="501.5" r="2.4" fill="#4a8f2a"/><circle cx="714.8" cy="501.5" r="1.0" fill="#2a4a30"/><circle cx="714.8" cy="506.0" r="2.4" fill="#4a8f2a"/><circle cx="714.8" cy="506.0" r="1.0" fill="#2a4a30"/><circle cx="723.5" cy="501.5" r="2.4" fill="#4a8f2a"/><circle cx="723.5" cy="501.5" r="1.0" fill="#2a4a30"/><circle cx="723.5" cy="506.0" r="2.4" fill="#4a8f2a"/><circle cx="723.5" cy="506.0" r="1.0" fill="#2a4a30"/><circle cx="734.5" cy="501.5" r="2.4" fill="#4a8f2a"/><circle cx="734.5" cy="501.5" r="1.0" fill="#2a4a30"/><circle cx="734.5" cy="506.0" r="2.4" fill="#4a8f2a"/><circle cx="734.5" cy="506.0" r="1.0" fill="#2a4a30"/><circle cx="645.8" cy="422.0" r="2.6" fill="#4a8f2a"/><circle cx="645.8" cy="422.0" r="1.1" fill="#2a4a30"/><circle cx="646.6" cy="433.0" r="2.6" fill="#4a8f2a"/><circle cx="646.6" cy="433.0" r="1.1" fill="#2a4a30"/><circle cx="663.1" cy="432.5" r="2.6" fill="#4a8f2a"/><circle cx="663.1" cy="432.5" r="1.1" fill="#2a4a30"/><circle cx="680.7" cy="423.1" r="2.6" fill="#4a8f2a"/><circle cx="680.7" cy="423.1" r="1.1" fill="#2a4a30"/><circle cx="680.7" cy="433.0" r="2.6" fill="#4a8f2a"/><circle cx="680.7" cy="433.0" r="1.1" fill="#2a4a30"/><circle cx="695.9" cy="432.5" r="2.6" fill="#4a8f2a"/><circle cx="695.9" cy="432.5" r="1.1" fill="#2a4a30"/><circle cx="714.3" cy="422.5" r="2.6" fill="#4a8f2a"/><circle cx="714.3" cy="422.5" r="1.1" fill="#2a4a30"/><circle cx="714.3" cy="433.6" r="2.6" fill="#4a8f2a"/><circle cx="714.3" cy="433.6" r="1.1" fill="#2a4a30"/><circle cx="730.6" cy="433.0" r="2.6" fill="#4a8f2a"/><circle cx="730.6" cy="433.0" r="1.1" fill="#2a4a30"/><circle cx="642.6" cy="448.8" r="2.6" fill="#4a8f2a"/><circle cx="642.6" cy="448.8" r="1.1" fill="#2a4a30"/><circle cx="658.4" cy="448.0" r="2.6" fill="#4a8f2a"/><circle cx="658.4" cy="448.0" r="1.1" fill="#2a4a30"/><circle cx="676.0" cy="449.6" r="2.6" fill="#4a8f2a"/><circle cx="676.0" cy="449.6" r="1.1" fill="#2a4a30"/><circle cx="692.5" cy="448.0" r="2.6" fill="#4a8f2a"/><circle cx="692.5" cy="448.0" r="1.1" fill="#2a4a30"/><circle cx="695.9" cy="454.6" r="2.6" fill="#4a8f2a"/><circle cx="695.9" cy="454.6" r="1.1" fill="#2a4a30"/><circle cx="709.6" cy="449.6" r="2.6" fill="#4a8f2a"/><circle cx="709.6" cy="449.6" r="1.1" fill="#2a4a30"/><circle cx="726.7" cy="448.0" r="2.6" fill="#4a8f2a"/><circle cx="726.7" cy="448.0" r="1.1" fill="#2a4a30"/><circle cx="743.8" cy="449.6" r="2.6" fill="#4a8f2a"/><circle cx="743.8" cy="449.6" r="1.1" fill="#2a4a30"/><circle cx="750.3" cy="443.0" r="2.6" fill="#4a8f2a"/><circle cx="750.3" cy="443.0" r="1.1" fill="#2a4a30"/><circle cx="663.6" cy="460.6" r="2.6" fill="#4a8f2a"/><circle cx="663.6" cy="460.6" r="1.1" fill="#2a4a30"/><circle cx="741.7" cy="459.3" r="2.6" fill="#4a8f2a"/><circle cx="741.7" cy="459.3" r="1.1" fill="#2a4a30"/><circle cx="741.7" cy="467.2" r="2.6" fill="#4a8f2a"/><circle cx="741.7" cy="467.2" r="1.1" fill="#2a4a30"/><circle cx="707.8" cy="476.4" r="2.6" fill="#4a8f2a"/><circle cx="707.8" cy="476.4" r="1.1" fill="#2a4a30"/><circle cx="661.5" cy="483.7" r="2.6" fill="#4a8f2a"/><circle cx="661.5" cy="483.7" r="1.1" fill="#2a4a30"/><circle cx="672.8" cy="486.9" r="2.6" fill="#4a8f2a"/><circle cx="672.8" cy="486.9" r="1.1" fill="#2a4a30"/><circle cx="694.6" cy="483.5" r="2.6" fill="#4a8f2a"/><circle cx="694.6" cy="483.5" r="1.1" fill="#2a4a30"/><circle cx="707.8" cy="486.4" r="2.6" fill="#4a8f2a"/><circle cx="707.8" cy="486.4" r="1.1" fill="#2a4a30"/><circle cx="730.1" cy="483.7" r="2.6" fill="#4a8f2a"/><circle cx="730.1" cy="483.7" r="1.1" fill="#2a4a30"/><circle cx="775.3" cy="436.5" r="2.6" fill="#4a8f2a"/><circle cx="775.3" cy="436.5" r="1.1" fill="#2a4a30"/><circle cx="810.0" cy="432.3" r="2.6" fill="#4a8f2a"/><circle cx="810.0" cy="432.3" r="1.1" fill="#2a4a30"/><circle cx="808.9" cy="450.1" r="2.6" fill="#4a8f2a"/><circle cx="808.9" cy="450.1" r="1.1" fill="#2a4a30"/><circle cx="782.6" cy="454.1" r="2.6" fill="#4a8f2a"/><circle cx="782.6" cy="454.1" r="1.1" fill="#2a4a30"/><circle cx="810.2" cy="408.9" r="2.6" fill="#4a8f2a"/><circle cx="810.2" cy="408.9" r="1.1" fill="#2a4a30"/><circle cx="826.5" cy="393.1" r="2.6" fill="#4a8f2a"/><circle cx="826.5" cy="393.1" r="1.1" fill="#2a4a30"/><circle cx="847.5" cy="387.1" r="2.6" fill="#4a8f2a"/><circle cx="847.5" cy="387.1" r="1.1" fill="#2a4a30"/><circle cx="850.1" cy="404.1" r="2.6" fill="#4a8f2a"/><circle cx="850.1" cy="404.1" r="1.1" fill="#2a4a30"/><circle cx="880.3" cy="389.2" r="2.6" fill="#4a8f2a"/><circle cx="880.3" cy="389.2" r="1.1" fill="#2a4a30"/><circle cx="885.1" cy="404.9" r="2.6" fill="#4a8f2a"/><circle cx="885.1" cy="404.9" r="1.1" fill="#2a4a30"/><circle cx="896.9" cy="404.9" r="2.6" fill="#4a8f2a"/><circle cx="896.9" cy="404.9" r="1.1" fill="#2a4a30"/><circle cx="837.8" cy="428.6" r="2.6" fill="#4a8f2a"/><circle cx="837.8" cy="428.6" r="1.1" fill="#2a4a30"/><circle cx="862.0" cy="428.3" r="2.6" fill="#4a8f2a"/><circle cx="862.0" cy="428.3" r="1.1" fill="#2a4a30"/><circle cx="886.1" cy="427.8" r="2.6" fill="#4a8f2a"/><circle cx="886.1" cy="427.8" r="1.1" fill="#2a4a30"/><circle cx="931.0" cy="418.1" r="2.6" fill="#4a8f2a"/><circle cx="931.0" cy="418.1" r="1.1" fill="#2a4a30"/><circle cx="977.5" cy="407.6" r="2.6" fill="#4a8f2a"/><circle cx="977.5" cy="407.6" r="1.1" fill="#2a4a30"/><circle cx="977.0" cy="436.5" r="2.6" fill="#4a8f2a"/><circle cx="977.0" cy="436.5" r="1.1" fill="#2a4a30"/><circle cx="777.4" cy="408.9" r="3" fill="#c89a28"/><circle cx="777.4" cy="408.9" r="1.3" fill="#c02828"/><circle cx="802.1" cy="412.6" r="3" fill="#c89a28"/><circle cx="802.1" cy="412.6" r="1.3" fill="#c02828"/><circle cx="890.9" cy="417.3" r="3" fill="#c89a28"/><circle cx="890.9" cy="417.3" r="1.3" fill="#c02828"/><circle cx="921.8" cy="419.4" r="3" fill="#c89a28"/><circle cx="921.8" cy="419.4" r="1.3" fill="#c02828"/><circle cx="914.0" cy="431.7" r="3" fill="#c89a28"/><circle cx="914.0" cy="431.7" r="1.3" fill="#c02828"/><circle cx="930.3" cy="431.7" r="3" fill="#c89a28"/><circle cx="930.3" cy="431.7" r="1.3" fill="#c02828"/><circle cx="926.3" cy="445.4" r="3" fill="#c89a28"/><circle cx="926.3" cy="445.4" r="1.3" fill="#c02828"/><circle cx="795.8" cy="470.6" r="3" fill="#c89a28"/><circle cx="795.8" cy="470.6" r="1.3" fill="#c02828"/><circle cx="878.5" cy="463.8" r="3" fill="#c89a28"/><circle cx="878.5" cy="463.8" r="1.3" fill="#c02828"/><circle cx="964.9" cy="470.3" r="3" fill="#c89a28"/><circle cx="964.9" cy="470.3" r="1.3" fill="#c02828"/><rect x="770.0" y="424.6" width="4.2" height="4.2" fill="#dcbc90"/><rect x="775.8" y="424.6" width="4.2" height="4.2" fill="#dcbc90"/><rect x="794.2" y="432.3" width="4.2" height="4.2" fill="#dcbc90"/><rect x="800.8" y="432.3" width="4.2" height="4.2" fill="#dcbc90"/><rect x="773.7" y="459.0" width="4.2" height="4.2" fill="#dcbc90"/><rect x="783.7" y="459.0" width="4.2" height="4.2" fill="#dcbc90"/><rect x="793.4" y="459.0" width="4.2" height="4.2" fill="#dcbc90"/><rect x="773.7" y="469.0" width="4.2" height="4.2" fill="#dcbc90"/><rect x="783.7" y="469.0" width="4.2" height="4.2" fill="#dcbc90"/><rect x="836.7" y="461.9" width="4.2" height="4.2" fill="#dcbc90"/><rect x="846.7" y="461.9" width="4.2" height="4.2" fill="#dcbc90"/><rect x="856.7" y="461.9" width="4.2" height="4.2" fill="#dcbc90"/><rect x="866.4" y="461.9" width="4.2" height="4.2" fill="#dcbc90"/><rect x="836.7" y="472.2" width="4.2" height="4.2" fill="#dcbc90"/><rect x="846.7" y="472.2" width="4.2" height="4.2" fill="#dcbc90"/><rect x="856.7" y="472.2" width="4.2" height="4.2" fill="#dcbc90"/><rect x="866.4" y="472.2" width="4.2" height="4.2" fill="#dcbc90"/><rect x="876.4" y="472.2" width="4.2" height="4.2" fill="#dcbc90"/><rect x="919.0" y="469.0" width="4.2" height="4.2" fill="#dcbc90"/><rect x="933.9" y="469.0" width="4.2" height="4.2" fill="#dcbc90"/><rect x="947.9" y="469.0" width="4.2" height="4.2" fill="#dcbc90"/><rect x="892.2" y="387.1" width="4.2" height="4.2" fill="#dcbc90"/><rect x="899.3" y="387.1" width="4.2" height="4.2" fill="#dcbc90"/><rect x="906.4" y="387.1" width="4.2" height="4.2" fill="#dcbc90"/><rect x="827.8" y="427.8" width="4.2" height="4.2" fill="#dcbc90"/><rect x="853.3" y="427.8" width="4.2" height="4.2" fill="#dcbc90"/><rect x="876.9" y="427.8" width="4.2" height="4.2" fill="#dcbc90"/><rect x="810.0" y="459.0" width="4.2" height="4.2" fill="#dcbc90"/><rect x="810.0" y="467.2" width="4.2" height="4.2" fill="#dcbc90"/><rect x="810.0" y="474.8" width="4.2" height="4.2" fill="#dcbc90"/><rect x="903.2" y="459.0" width="4.2" height="4.2" fill="#dcbc90"/><rect x="903.2" y="467.2" width="4.2" height="4.2" fill="#dcbc90"/><rect x="903.2" y="474.8" width="4.2" height="4.2" fill="#dcbc90"/><rect x="930.8" y="443.3" width="4.2" height="4.2" fill="#dcbc90"/><rect x="642.6" y="416.8" width="1.8" height="1.8" fill="#ff80c0"/><rect x="661.0" y="416.0" width="1.8" height="1.8" fill="#ff80c0"/><rect x="676.8" y="416.8" width="1.8" height="1.8" fill="#ff4060"/><rect x="695.2" y="416.0" width="1.8" height="1.8" fill="#ff4060"/><rect x="710.9" y="416.8" width="1.8" height="1.8" fill="#ff4060"/><rect x="730.1" y="416.0" width="1.8" height="1.8" fill="#f0f0ff"/><rect x="745.1" y="415.4" width="1.8" height="1.8" fill="#ff80c0"/><rect x="643.9" y="467.2" width="1.8" height="1.8" fill="#ff4060"/><rect x="653.1" y="467.2" width="1.8" height="1.8" fill="#ff4060"/><rect x="678.1" y="467.2" width="1.8" height="1.8" fill="#e0e0ff"/><rect x="687.3" y="467.2" width="1.8" height="1.8" fill="#ff80c0"/><rect x="704.4" y="467.2" width="1.8" height="1.8" fill="#ff4060"/><rect x="712.2" y="467.2" width="1.8" height="1.8" fill="#e0e0ff"/><rect x="722.2" y="467.2" width="1.8" height="1.8" fill="#ff4060"/><rect x="760.8" y="462.5" width="1.8" height="1.8" fill="#e0e0ff"/><rect x="764.8" y="407.6" width="1.8" height="1.8" fill="#ff4060"/><rect x="767.9" y="416.0" width="1.8" height="1.8" fill="#ff80c0"/><rect x="783.9" y="389.7" width="1.8" height="1.8" fill="#ff80c0"/><rect x="797.6" y="402.0" width="1.8" height="1.8" fill="#f0f0ff"/><rect x="802.9" y="404.1" width="1.8" height="1.8" fill="#ff80c0"/><rect x="835.7" y="386.3" width="1.8" height="1.8" fill="#ff80c0"/><rect x="852.8" y="393.6" width="1.8" height="1.8" fill="#ff80c0"/><rect x="868.5" y="386.3" width="1.8" height="1.8" fill="#ff80c0"/><rect x="855.9" y="404.1" width="1.8" height="1.8" fill="#f0f0ff"/><rect x="858.8" y="406.8" width="1.8" height="1.8" fill="#ff4060"/><rect x="865.4" y="411.5" width="1.8" height="1.8" fill="#ff80c0"/><rect x="868.5" y="409.9" width="1.8" height="1.8" fill="#e0e0ff"/><rect x="875.1" y="407.6" width="1.8" height="1.8" fill="#e0e0ff"/><rect x="788.4" y="439.6" width="1.8" height="1.8" fill="#f0f0ff"/><rect x="790.5" y="441.7" width="1.8" height="1.8" fill="#ff80c0"/><rect x="816.8" y="444.9" width="1.8" height="1.8" fill="#ff4060"/><rect x="841.5" y="444.9" width="1.8" height="1.8" fill="#e0e0ff"/><rect x="865.1" y="443.5" width="1.8" height="1.8" fill="#e0e0ff"/><rect x="889.5" y="444.9" width="1.8" height="1.8" fill="#ff80c0"/><rect x="826.5" y="397.6" width="1.8" height="1.8" fill="#f0f0ff"/><rect x="737.2" y="496.1" width="1.8" height="1.8" fill="#ff4060"/><rect x="738.5" y="498.7" width="1.8" height="1.8" fill="#ff4060"/><rect x="739.8" y="505.3" width="1.8" height="1.8" fill="#ff4060"/><circle cx="953.1" cy="397.1" r="3.3" fill="#1030f0"/><path d="M948.6 397.1a4.5 4.5 0 0 1 9 0" fill="none" stroke="#c8a020" stroke-width="1"/><circle cx="953.1" cy="416.8" r="3.3" fill="#1030f0"/><path d="M948.6 416.8a4.5 4.5 0 0 1 9 0" fill="none" stroke="#c8a020" stroke-width="1"/><circle cx="953.1" cy="436.2" r="4.8" fill="#d4a51a"/><circle cx="953.1" cy="436.2" r="2.9" fill="#e8d8ff"/><g stroke="#fff" stroke-width="1" fill="none"><circle cx="251.5" cy="540" r="6.5"/><path d="M241 540H262M251.5 529.5V550.5M244.5 533L258.5 547M258.5 533L244.5 547"/></g><g stroke="#e01010" stroke-width="1.1" fill="none"><rect x="249.3" y="574" width="176.4" height="59.2"/><path d="M249.3 589.4H425.7M249.3 604.3H425.7M249.3 618.7H425.7M323.3 604.3V618.7"/></g><text x="306" y="585" font-family="Liberation Sans,sans-serif" font-size="9" fill="#e01010" textLength="22" lengthAdjust="spacingAndGlyphs">ULINK</text><text x="254" y="600" font-family="Liberation Sans,sans-serif" font-size="9" fill="#e01010" textLength="52" lengthAdjust="spacingAndGlyphs">BOARD NAME</text><text x="329.5" y="600" font-family="Liberation Sans,sans-serif" font-size="9" fill="#e01010" textLength="58" lengthAdjust="spacingAndGlyphs">PCIE Interface</text><text x="254" y="615" font-family="Liberation Sans,sans-serif" font-size="9" fill="#e01010" textLength="30" lengthAdjust="spacingAndGlyphs">REV A1</text><text x="329.5" y="615" font-family="Liberation Sans,sans-serif" font-size="9" fill="#e01010" textLength="60" lengthAdjust="spacingAndGlyphs">DATE: DEC/2016</text><text x="267.5" y="629.5" font-family="Liberation Sans,sans-serif" font-size="9" fill="#e01010" textLength="15" lengthAdjust="spacingAndGlyphs">GND</text></svg>
<div class="a" style="left:4px;top:80px;width:155px;height:671px;background:#5cc3a6;border:1px solid;border-color:#0a2a20 #1f5f4f #1f5f4f #0a2a20"></div>
<div class="a cy" style="left:7px;top:83px;width:150px;height:19px;border:1px solid #000"></div>
<div class="a mono" style="left:9px;top:85px;font-size:14.5px;line-height:16px;white-space:nowrap;letter-spacing:0.35px">Job : 4v2pe044a0</div>
<div class="a cy" style="left:7px;top:101px;width:150px;height:20px;border:1px solid #000;border-top-width:2px"></div>
<div class="a mono" style="left:9px;top:104.5px;font-size:14.5px;line-height:16px;white-space:nowrap;letter-spacing:0.35px">Step: cam</div>
<div class="a" style="left:7px;top:123px;width:150px;height:27px;background:#5cc3a6;border:1px solid #000"></div>
<div class="a cy" style="left:10px;top:126px;width:144px;height:21px;border:2px solid;border-color:#e4f7f7 #3f7f7f #3f7f7f #e4f7f7"></div>
<div class="a mono" style="left:13px;top:129px;font-size:14.5px;line-height:16px;white-space:nowrap;letter-spacing:0.45px">Job Matrix ...</div>
<div class="a" style="left:8px;top:154px;width:127px;height:572px;background:#3da88b;border:2px solid;border-color:#1f5f4f #c8f0e8 #c8f0e8 #1f5f4f"></div>
<div class="a" style="left:10px;top:156px;width:123px;height:568px;overflow:hidden">
<div class="a" style="left:1px;top:4px;width:117px;height:34px;background:#000;border:1px solid #0b3a2e"></div>
<div class="lay" style="left:2px;top:5px"><div class="cb"></div><div class="nm" style="background:#fff">to</div><svg class="hd" viewBox="0 0 8 8"><path d="M3.2 0.3L5.5 1.2L7.8 3.2L5.6 4.8L5 7.2L0.5 7.2L1.6 3.6Z" fill="#000"/></svg></div>
<div class="lay" style="left:2px;top:21px"><div class="cb"></div><div class="nm" style="background:#14a07a">ts</div></div>
<div class="a" style="left:1px;top:41px;width:117px;height:18px;background:#000;border:1px solid #0b3a2e"></div>
<div class="lay" style="left:2px;top:42px"><div class="cb"></div><div class="nm" style="background:#9ddcdc">plncs</div></div>
<div class="a" style="left:1px;top:62px;width:117px;height:34px;background:#000;border:1px solid #0b3a2e"></div>
<div class="lay" style="left:2px;top:63px"><div class="cb"></div><div class="nm" style="background:#ffc553">cs</div><svg class="hd" viewBox="0 0 8 8"><path d="M3.2 0.3L5.5 1.2L7.8 3.2L5.6 4.8L5 7.2L0.5 7.2L1.6 3.6Z" fill="#000"/></svg></div>
<div class="lay" style="left:2px;top:79px"><div class="cb"></div><div class="a" style="left:18px;top:1px;width:14px;height:14px;border-radius:50%;background:#4a9a1a"></div><div class="nm" style="background:#dca514">pln2t</div><svg class="hd" viewBox="0 0 8 8"><path d="M3.2 0.3L5.5 1.2L7.8 3.2L5.6 4.8L5 7.2L0.5 7.2L1.6 3.6Z" fill="#000"/></svg></div>
<div class="a" style="left:1px;top:99px;width:117px;height:18px;background:#000;border:1px solid #0b3a2e"></div>
<div class="lay" style="left:2px;top:100px"><div class="cb"></div><div class="nm" style="background:#9ddcdc">pln3b</div></div>
<div class="a" style="left:1px;top:120px;width:117px;height:18px;background:#000;border:1px solid #0b3a2e"></div>
<div class="lay" style="left:2px;top:121px"><div class="cb"></div><div class="nm" style="background:#ffc553">sig3b</div><svg class="hd" viewBox="0 0 8 8"><path d="M3.2 0.3L5.5 1.2L7.8 3.2L5.6 4.8L5 7.2L0.5 7.2L1.6 3.6Z" fill="#000"/></svg></div>
<div class="a" style="left:1px;top:141px;width:117px;height:18px;background:#000;border:1px solid #0b3a2e"></div>
<div class="lay" style="left:2px;top:142px"><div class="cb"></div><div class="nm" style="background:#9ddcdc">plnss</div></div>
<div class="a" style="left:1px;top:162px;width:117px;height:50px;background:#000;border:1px solid #0b3a2e"></div>
<div class="lay" style="left:2px;top:163px"><div class="cb"></div><div class="nm" style="background:#ffc553">ss</div><svg class="hd" viewBox="0 0 8 8"><path d="M3.2 0.3L5.5 1.2L7.8 3.2L5.6 4.8L5 7.2L0.5 7.2L1.6 3.6Z" fill="#000"/></svg></div>
<div class="lay" style="left:2px;top:179px"><div class="cb"></div><div class="nm" style="background:#14a07a">bs</div></div>
<div class="lay" style="left:2px;top:195px"><div class="cb"></div><div class="nm" style="background:#fff">bo</div></div>
<div class="a" style="left:1px;top:215px;width:117px;height:50px;background:#000;border:1px solid #0b3a2e"></div>
<div class="lay" style="left:2px;top:216px"><div class="cb"></div><div class="a" style="left:18px;top:1px;width:14px;height:14px;border-radius:50%;background:#0a14ff"></div><div class="nm" style="background:#9db7c0">drl</div></div>
<div class="lay" style="left:2px;top:232px"><div class="cb"></div><div class="nm" style="background:#9db7c0">ldi</div></div>
<div class="lay" style="left:2px;top:248px"><div class="cb"></div><div class="nm" style="background:#d9d9d9">rout</div></div>
<div class="a" style="left:1px;top:268px;width:117px;height:306px;background:#000;border:1px solid #0b3a2e"></div>
<div class="lay" style="left:2px;top:269px"><div class="cb"></div><div class="nm" style="background:#9ddcdc">tp</div></div>
<div class="lay" style="left:2px;top:285px"><div class="cb"></div><div class="nm" style="background:#9ddcdc">bp</div></div>
<div class="lay" style="left:2px;top:301px"><div class="cb"></div><div class="nm" style="background:#9ddcdc">dd</div></div>
<div class="lay" style="left:2px;top:317px"><div class="cb"></div><div class="nm" style="background:#9ddcdc">fzkdrl</div></div>
<div class="lay" style="left:2px;top:333px"><div class="cb"></div><div class="nm" style="background:#9ddcdc">ydkdrl</div></div>
<div class="lay" style="left:2px;top:349px"><div class="cb"></div><div class="nm" style="background:#9ddcdc">cvia</div></div>
<div class="lay" style="left:2px;top:365px"><div class="cb"></div><div class="nm" style="background:#9ddcdc">d</div></div>
<div class="lay" style="left:2px;top:381px"><div class="cb"></div><div class="nm" style="background:#9ddcdc">routq</div></div>
<div class="lay" style="left:2px;top:397px"><div class="cb"></div><div class="nm" style="background:#9ddcdc">to.d</div><svg class="hd" viewBox="0 0 8 8"><path d="M3.2 0.3L5.5 1.2L7.8 3.2L5.6 4.8L5 7.2L0.5 7.2L1.6 3.6Z" fill="#000"/></svg></div>
<div class="lay" style="left:2px;top:413px"><div class="cb"></div><div class="nm" style="background:#9ddcdc">ts.d</div></div>
<div class="lay" style="left:2px;top:429px"><div class="cb"></div><div class="nm" style="background:#9ddcdc">cs.d</div><svg class="hd" viewBox="0 0 8 8"><path d="M3.2 0.3L5.5 1.2L7.8 3.2L5.6 4.8L5 7.2L0.5 7.2L1.6 3.6Z" fill="#000"/></svg></div>
<div class="lay" style="left:2px;top:445px"><div class="cb" style="border-color:#0000c8;box-shadow:0 0 0 2px #0000c8"></div><div class="a" style="left:18px;top:1px;width:14px;height:14px;border-radius:50%;background:#f01010"></div><div class="nm" style="background:#9ddcdc">pln2t.d</div><svg class="hd" style="right:15px" viewBox="0 0 8 8"><path d="M3.2 0.3L5.5 1.2L7.8 3.2L5.6 4.8L5 7.2L0.5 7.2L1.6 3.6Z" fill="#000"/></svg><div class="a" style="right:6px;top:6px;width:5px;height:5px;border:1px solid #000;background:linear-gradient(#000,#000) 1px 0/1px 100% no-repeat,linear-gradient(#000,#000) 0 1px/100% 1px no-repeat,#fff"></div></div>
<div class="lay" style="left:2px;top:461px"><div class="cb"></div><div class="nm" style="background:#9ddcdc">sig3b.d</div><svg class="hd" viewBox="0 0 8 8"><path d="M3.2 0.3L5.5 1.2L7.8 3.2L5.6 4.8L5 7.2L0.5 7.2L1.6 3.6Z" fill="#000"/></svg></div>
<div class="lay" style="left:2px;top:477px"><div class="cb"></div><div class="nm" style="background:#9ddcdc">ss.d</div><svg class="hd" viewBox="0 0 8 8"><path d="M3.2 0.3L5.5 1.2L7.8 3.2L5.6 4.8L5 7.2L0.5 7.2L1.6 3.6Z" fill="#000"/></svg></div>
<div class="lay" style="left:2px;top:493px"><div class="cb"></div><div class="nm" style="background:#9ddcdc">bs.d</div></div>
<div class="lay" style="left:2px;top:509px"><div class="cb"></div><div class="nm" style="background:#9ddcdc">bo.d</div></div>
<div class="lay" style="left:2px;top:525px"><div class="cb"></div><div class="nm" style="background:#9ddcdc">drl.d</div></div>
<div class="lay" style="left:2px;top:541px"><div class="cb"></div><div class="nm" style="background:#9ddcdc">rout.d</div></div>
<div class="lay" style="left:2px;top:557px"><div class="cb"></div><div class="nm" style="background:#9ddcdc">bp.d</div></div>
</div>
<div class="a" style="left:141px;top:154px;width:16px;height:572px;background:#4fb79a;border:1px solid;border-color:#1f5f4f #c8f0e8 #c8f0e8 #1f5f4f"></div>
<div class="a" style="left:143px;top:170px;width:12px;height:497px;background:#6ad0b4;border:2px solid;border-color:#b8efe0 #2a7a64 #2a7a64 #b8efe0"></div>
<svg class="a" style="left:143px;top:156px" width="12" height="13"><path d="M6 1L11 12L1 12Z" fill="#6ad0b4" stroke="#d8fff4" stroke-width="1"/><path d="M6 1L11 12L1 12" fill="none" stroke="#1f5f4f" stroke-width="1"/><path d="M6 1L1 12" stroke="#d8fff4"/></svg>
<svg class="a" style="left:143px;top:711px" width="12" height="13"><path d="M6 12L11 1L1 1Z" fill="#6ad0b4" stroke="#1f5f4f" stroke-width="1"/><path d="M1 1L11 1" stroke="#d8fff4"/><path d="M1 1L6 12" stroke="#d8fff4"/></svg>
<div class="a" style="left:7px;top:730px;width:150px;height:19px;background:#ffc24a;border:1px solid #2a2a10"></div>
<div class="a mono" style="left:11px;top:733px;font-size:11.7px;line-height:14px;white-space:nowrap">Selected : 0</div>
<div class="a" style="left:1440px;top:80px;width:159px;height:150px;background:#2f5f5f"></div>
<div class="a" style="left:1443px;top:83px;width:38px;height:38px;background:#9ddcdc;border:2px solid;border-color:#d8f4f4 #4a8080 #4a8080 #d8f4f4;outline:1px solid #000"></div><div class="a" style="left:1447px;top:87px;width:30px;height:30px;border:1px solid #000"></div><svg class="a" style="left:1443px;top:83px" width="38" height="38" viewBox="0 0 38 38"><rect x="12.4" y="13.4" width="15.2" height="14.2" stroke="#000" fill="none" stroke-width="1.8"/><path d="M20.5 5.8L26 10.8H23.8V16.8H17.2V10.8H15Z" fill="#000"/></svg>
<div class="a" style="left:1483px;top:83px;width:38px;height:38px;background:#9ddcdc;border:2px solid;border-color:#d8f4f4 #4a8080 #4a8080 #d8f4f4;outline:1px solid #000"></div><div class="a" style="left:1487px;top:87px;width:30px;height:30px;border:1px solid #000"></div><svg class="a" style="left:1483px;top:83px" width="38" height="38" viewBox="0 0 38 38"><rect x="12.6" y="11.4" width="15.4" height="14.8" stroke="#000" fill="none" stroke-width="1.8"/><path d="M20 32.2L14.3 27.3H16.6V21.5H23.4V27.3H25.7Z" fill="#000"/></svg>
<div class="a" style="left:1523px;top:83px;width:38px;height:38px;background:#9ddcdc;border:2px solid;border-color:#d8f4f4 #4a8080 #4a8080 #d8f4f4;outline:1px solid #000"></div><div class="a" style="left:1527px;top:87px;width:30px;height:30px;border:1px solid #000"></div><svg class="a" style="left:1523px;top:83px" width="38" height="38" viewBox="0 0 38 38"><path d="M9.5 18.5L19 9L29 18.5M11.8 18.5V29.6H26.6V18.5M24.8 14.5V9.5M18.8 29.6V22H22.4V29.6M24 8.5L26 7.3" stroke="#000" fill="none" stroke-width="1.5"/><rect x="13.4" y="21.9" width="2.3" height="2.3" stroke="#000" fill="none" stroke-width="1"/></svg>
<div class="a" style="left:1563px;top:83px;width:38px;height:38px;background:#9ddcdc;border:2px solid;border-color:#d8f4f4 #4a8080 #4a8080 #d8f4f4;outline:1px solid #000"></div><div class="a" style="left:1567px;top:87px;width:30px;height:30px;border:1px solid #000"></div><svg class="a" style="left:1563px;top:83px" width="38" height="38" viewBox="0 0 38 38"><rect x="8.8" y="8.6" width="22" height="21.8" stroke="#000" fill="none" stroke-width="2.2"/><path d="M19.8 8.6V30.4M8.8 24H30.8" stroke="#000" fill="none" stroke-width="1.5"/><text x="21.2" y="22.5" font-size="5.5" font-family="Liberation Sans,sans-serif" font-weight="bold" textLength="7.5" lengthAdjust="spacingAndGlyphs">xy</text></svg>
<div class="a" style="left:1443px;top:123px;width:38px;height:38px;background:#9ddcdc;border:2px solid;border-color:#d8f4f4 #4a8080 #4a8080 #d8f4f4;outline:1px solid #000"></div><div class="a" style="left:1447px;top:127px;width:30px;height:30px;border:1px solid #000"></div><svg class="a" style="left:1443px;top:123px" width="38" height="38" viewBox="0 0 38 38"><path d="M16 11.8H29V26.8H14.5V22.5" stroke="#000" fill="none" stroke-width="1.8"/><path d="M14.5 15V11.8H16" stroke="#000" fill="none" stroke-width="1.8"/><path d="M6.3 18.6L12 13.2V15.8H17.2V21.4H12V24Z" fill="#000"/></svg>
<div class="a" style="left:1483px;top:123px;width:38px;height:38px;background:#9ddcdc;border:2px solid;border-color:#d8f4f4 #4a8080 #4a8080 #d8f4f4;outline:1px solid #000"></div><div class="a" style="left:1487px;top:127px;width:30px;height:30px;border:1px solid #000"></div><svg class="a" style="left:1483px;top:123px" width="38" height="38" viewBox="0 0 38 38"><path d="M24.8 15V11.8H10.2V26.8H24.8V22.5" stroke="#000" fill="none" stroke-width="1.8"/><path d="M32.4 18.6L26.7 13.2V15.8H21.6V21.4H26.7V24Z" fill="#000"/></svg>
<div class="a" style="left:1523px;top:123px;width:38px;height:38px;background:#9ddcdc;border:2px solid;border-color:#d8f4f4 #4a8080 #4a8080 #d8f4f4;outline:1px solid #000"></div><div class="a" style="left:1527px;top:127px;width:30px;height:30px;border:1px solid #000"></div><svg class="a" style="left:1523px;top:123px" width="38" height="38" viewBox="0 0 38 38"><rect x="19.4" y="13.6" width="12" height="12.4" stroke="#000" fill="none" stroke-width="1.8"/><path d="M8.5 24.5H11.5C15.5 24.5 15.5 16.8 11.5 16.8H10" stroke="#000" fill="none" stroke-width="2.6"/><path d="M6.4 16.8L11.6 12.4V21.2Z" fill="#000"/></svg>
<div class="a" style="left:1563px;top:123px;width:38px;height:38px;background:#9ddcdc;border:2px solid;border-color:#d8f4f4 #4a8080 #4a8080 #d8f4f4;outline:1px solid #000"></div><div class="a" style="left:1567px;top:127px;width:30px;height:30px;border:1px solid #000"></div><svg class="a" style="left:1563px;top:123px" width="38" height="38" viewBox="0 0 38 38"><path d="M30.6 11.8H11.6V19.4H28.6V26.4H8.8" stroke="#000" fill="none" stroke-width="2"/><path d="M33.5 9.2L30.6 11.8L33.5 14.6M6.2 23.6L8.8 26.4L6.2 29.4" stroke="#000" fill="none" stroke-width="0.9"/></svg>
<div class="a" style="left:1443px;top:163px;width:38px;height:38px;background:#9ddcdc;border:2px solid;border-color:#d8f4f4 #4a8080 #4a8080 #d8f4f4;outline:1px solid #000"></div><div class="a" style="left:1447px;top:167px;width:30px;height:30px;border:1px solid #000"></div><svg class="a" style="left:1443px;top:163px" width="38" height="38" viewBox="0 0 38 38"><rect x="12.5" y="12.5" width="14.6" height="14.6" stroke="#000" fill="none" stroke-width="2"/><path d="M19.8 9.8L14.2 5.2H25.4ZM19.8 28.8L14.2 33H25.4ZM10.2 19.8L5 14.2V25.4ZM29 19.8L33.6 14.2V25.4Z" fill="#000"/></svg>
<div class="a" style="left:1483px;top:163px;width:38px;height:38px;background:#9ddcdc;border:2px solid;border-color:#d8f4f4 #4a8080 #4a8080 #d8f4f4;outline:1px solid #000"></div><div class="a" style="left:1487px;top:167px;width:30px;height:30px;border:1px solid #000"></div><svg class="a" style="left:1483px;top:163px" width="38" height="38" viewBox="0 0 38 38"><rect x="15.9" y="16" width="7" height="7" stroke="#000" fill="none" stroke-width="2.2"/><path d="M19.4 8L13.8 12.3H25ZM19.4 30.8L13.8 26.5H25ZM7.4 19.5L11.6 14V25ZM31.4 19.5L27.2 14V25Z" fill="#000"/></svg>
<div class="a" style="left:1523px;top:163px;width:38px;height:38px;background:#9ddcdc;border:2px solid;border-color:#d8f4f4 #4a8080 #4a8080 #d8f4f4;outline:1px solid #000"></div><div class="a" style="left:1527px;top:167px;width:30px;height:30px;border:1px solid #000"></div><svg class="a" style="left:1523px;top:163px" width="38" height="38" viewBox="0 0 38 38"><text x="10" y="25.2" font-size="16" font-family="Liberation Sans,sans-serif" font-weight="bold" textLength="18.5" lengthAdjust="spacingAndGlyphs" stroke="#000" stroke-width=".5">1:2</text></svg>
<div class="a" style="left:1563px;top:163px;width:38px;height:38px;background:#9ddcdc;border:2px solid;border-color:#d8f4f4 #4a8080 #4a8080 #d8f4f4;outline:1px solid #000"></div><div class="a" style="left:1567px;top:167px;width:30px;height:30px;border:1px solid #000"></div><svg class="a" style="left:1563px;top:163px" width="38" height="38" viewBox="0 0 38 38"><rect x="8.8" y="8.6" width="22" height="21.8" stroke="#000" fill="none" stroke-width="2.2"/><text x="15" y="26.4" font-size="16" font-family="Liberation Sans,sans-serif" font-weight="bold">?</text></svg>
<div class="a" style="left:1443px;top:203px;width:38px;height:38px;background:#9ddcdc;border:2px solid;border-color:#d8f4f4 #4a8080 #4a8080 #d8f4f4;outline:1px solid #000"></div><div class="a" style="left:1447px;top:207px;width:30px;height:30px;border:1px solid #000"></div><svg class="a" style="left:1443px;top:203px" width="38" height="38" viewBox="0 0 38 38"><path d="M7.5 9.6H23" stroke="#000" fill="none" stroke-width="2.6"/><path d="M22 9.6C22 4.5 30 5 31 7.5H27V11.5H31C30 14.5 22 14.5 22 9.6Z" fill="#000"/><path d="M7.8 16.6L11.5 14.8H30.4V18.4H11.5Z" stroke="#000" fill="none" stroke-width="1"/><path d="M19 22.5H26" stroke="#000" fill="none" stroke-width="1.6"/></svg>
<div class="a" style="left:1483px;top:203px;width:38px;height:38px;background:#9ddcdc;border:2px solid;border-color:#d8f4f4 #4a8080 #4a8080 #d8f4f4;outline:1px solid #000"></div><div class="a" style="left:1487px;top:207px;width:30px;height:30px;border:1px solid #000"></div><svg class="a" style="left:1483px;top:203px" width="38" height="38" viewBox="0 0 38 38"><path d="M13.8 5V33M23.8 5V33M5 14.8H33M5 24.8H33" stroke="#e8a8b0" stroke-width="0.8" fill="none"/></svg>
<div class="a" style="left:1523px;top:203px;width:38px;height:38px;background:#9ddcdc;border:2px solid;border-color:#d8f4f4 #4a8080 #4a8080 #d8f4f4;outline:1px solid #000"></div><div class="a" style="left:1525px;top:205px;width:34px;height:34px;border:3px solid #c81414"></div><svg class="a" style="left:1523px;top:203px" width="38" height="38" viewBox="0 0 38 38"><path d="M8 7V17.3H18.5V24" stroke="#f01010" stroke-width="1" fill="none"/><circle cx="8.5" cy="17.3" r="2.6" fill="#f01010"/><path d="M16.5 9V26" stroke="#1010f0" stroke-width="1.2"/><circle cx="16.5" cy="8.3" r="2.6" fill="#1010f0"/><rect x="21" y="6" width="11" height="24" fill="none" stroke="#000" stroke-width="1"/><circle cx="26" cy="10.8" r="2.5" fill="#fff" stroke="#000" stroke-width=".8"/><circle cx="26" cy="18.8" r="3.6" fill="#ffc83c" stroke="#806000" stroke-width=".4"/></svg>
<div class="a" style="left:1563px;top:203px;width:38px;height:38px;background:#9ddcdc;border:2px solid;border-color:#d8f4f4 #4a8080 #4a8080 #d8f4f4;outline:1px solid #000"></div><div class="a" style="left:1565px;top:205px;width:34px;height:34px;border:3px solid #c81414"></div><svg class="a" style="left:1563px;top:203px" width="38" height="38" viewBox="0 0 38 38"><path d="M8.5 7V17" stroke="#000" stroke-width="1"/><circle cx="8.3" cy="17.3" r="2.6" fill="#000"/><path d="M16.5 9V17" stroke="#000" stroke-width="1"/><circle cx="16.5" cy="8.3" r="2.6" fill="#000"/><path d="M11.5 16.8H15.5M11.7 14.5V16.8M13.5 14.5V16.8M15.3 14.5V16.8" stroke="#f01010" stroke-width=".8" fill="none"/><rect x="21" y="6" width="11" height="24" fill="none" stroke="#000" stroke-width="1"/><circle cx="26.2" cy="11.8" r="3.6" fill="#f01010"/><circle cx="26.2" cy="19.8" r="2.5" fill="#fff" stroke="#000" stroke-width=".8"/></svg>
<div class="a" style="left:4px;top:753px;width:1595px;height:34px;background:#ffffcc;border-top:1px solid #2a6a5a"></div>
<div class="a" style="left:5px;top:754px;width:33px;height:32px;background:#000"></div>
<div class="a" style="left:5px;top:754px;width:31px;height:30px;background:#ffffcc;border:1px solid;border-color:#fffff0 #d8d8a8 #d8d8a8 #fffff0"></div>
<div class="a" style="left:8px;top:757px;width:25px;height:24px;border:1px solid;border-color:#c8c8a0 #f8f8e0 #f8f8e0 #c8c8a0"></div>
<div class="a" style="left:11px;top:759px;width:21px;height:20px;border:1px solid #000"></div>
<div class="a" style="left:38px;top:754px;width:33px;height:32px;background:#000"></div>
<div class="a" style="left:38px;top:754px;width:31px;height:30px;background:#ffffcc;border:1px solid;border-color:#fffff0 #d8d8a8 #d8d8a8 #fffff0"></div>
<div class="a" style="left:41px;top:757px;width:25px;height:24px;border:1px solid;border-color:#c8c8a0 #f8f8e0 #f8f8e0 #c8c8a0"></div>
<div class="a" style="left:44px;top:759px;width:21px;height:20px;border:1px solid #000"></div>
<svg class="a" style="left:5px;top:754px" width="31" height="30" viewBox="5 754 31 30"><path d="M14.2 762V775.6H28" stroke="#000" stroke-width="1" fill="none"/><path d="M16.6 764L26.6 773.6M16.4 766.8V763.8H19.4M26.8 770.6V773.8H23.6" stroke="#000" stroke-width="1" fill="none"/></svg>
<svg class="a" style="left:38px;top:754px" width="31" height="30" viewBox="38 754 31 30"><path d="M45.5 775.6H60M45.8 775.4L59 762.8" stroke="#000" stroke-width="1.3" fill="none"/><path d="M49.5 764.5V767.5H51" stroke="#000" stroke-width="1" fill="none"/><path d="M50 775.5A4 4 0 0 0 49 772.5" stroke="#000" stroke-width=".8" fill="none"/><text x="54" y="774" font-size="5" font-family="Liberation Sans,sans-serif" font-weight="bold">ox</text></svg>
<div class="a" style="left:70px;top:754px;width:29px;height:31px;background:#ffffcc;border:3px solid #5cc0a8"></div>
<div class="a" style="left:73px;top:757px;width:23px;height:25px;border:1px solid;border-color:#8a8a68 #f8f8e0 #f8f8e0 #8a8a68"></div>
<svg class="a" style="left:70px;top:754px" width="29" height="31" viewBox="70 754 29 31"><path d="M79.3 761.5H92V776.5H76.5V764.3Z" fill="none" stroke="#000" stroke-width="1.3"/><path d="M84.3 763.5V775M78.5 769H90.5" stroke="#000" stroke-width="1.1"/><path d="M80 763.7H90.3V774.7H78.6V765.2Z" fill="none" stroke="#000" stroke-width=".7"/></svg>
<div class="a mono" style="left:101px;top:761px;font-size:13px;line-height:15px;white-space:nowrap;font-family:'Liberation Serif',serif;letter-spacing:1px;word-spacing:1px">X Y :</div>
<div class="a" style="left:148px;top:754px;width:172px;height:31px;background:#ffffcc;border:2px solid;border-color:#8a8a60 #ffffff #ffffff #8a8a60;outline:1px solid #c8c8a0"></div>
<div class="a" style="left:155px;top:758px;width:1px;height:14px;border-left:1px dotted #000"></div>
<div class="a" style="left:321px;top:753px;width:30px;height:33px;background:#ffffcc;border:3px solid;border-color:#2f8f78 #8fe0c8 #8fe0c8 #2f8f78"></div>
<div class="a" style="left:327px;top:759px;width:18px;height:20px;border:1px solid #000;text-align:center;font:bold 15px/18px 'Liberation Sans',sans-serif">!</div>
<div class="a" style="left:351px;top:753px;width:2px;height:33px;background:#2a6a5a"></div>
<div class="a mono" style="left:355px;top:762px;font-size:11.5px;line-height:14px;white-space:nowrap;letter-spacing:0.1px">&lt;M1&gt; - Select first area corner</div>
<div class="a" style="left:4px;top:786px;width:1595px;height:31px;background:#86aca4"></div>
<div class="a" style="left:6px;top:789px;width:1593px;height:27px;background:linear-gradient(#a8f6f6,#b8ffff 25%,#b8ffff 75%,#a0f0f0);border:2px solid;border-color:#0a2020 #c0ffff #0a2020 #0a2020"></div>
<div class="a" style="left:0;top:817px;width:1599px;height:5px;background:#d4d0c8;border-bottom:1px solid #808080"></div>
<div class="a" style="left:571px;top:46px;width:589px;height:336px;background:#d4d0c8;border:1px solid;border-color:#e8e8e8 #404040 #404040 #e8e8e8;box-shadow:inset 1px 1px 0 #fff,inset -1px -1px 0 #808080"></div>
<div class="a" style="left:574px;top:49px;width:582px;height:20px;background:linear-gradient(90deg,#808080,#b0b0b0 60%,#c0c0c0)"></div>
<div class="a gx" style="left:577px;top:53px;width:15px;height:14px"></div>
<div class="a" style="left:595px;top:52px;font:bold 11.5px/16px 'Liberation Sans',sans-serif;color:#d8d4cc;white-space:nowrap">Popview - 1</div>
<div class="a" style="left:1138px;top:53px;width:16px;height:14px;background:#d4d0c8;border:1px solid;border-color:#fff #404040 #404040 #fff"></div>
<svg class="a" style="left:1141px;top:55px" width="9" height="9"><path d="M1 1L8 8M8 1L1 8" stroke="#000" stroke-width="1.8"/></svg>
<div class="a" style="left:574px;top:69px;width:583px;height:311px;background:#2f6f5c"></div>
<div class="a" id="pvc" style="left:577px;top:73px;width:540px;height:274px;background:#000;overflow:hidden">
<svg class="a" style="left:0;top:0" width="540" height="274" viewBox="577 73 540 274"><rect x="705" y="70" width="7" height="280" fill="#3f9a1a"/><rect x="706.5" y="70" width="4" height="280" fill="#b8a81a"/><rect x="806" y="70" width="70" height="8" fill="#3f9a1a"/><rect x="806" y="70" width="70" height="6" fill="#b8a81a"/><circle cx="1052.4" cy="89.4" r="8.5" fill="#c9a21c"/><circle cx="1052.4" cy="89.4" r="5.1" fill="#d0c4ff"/><circle cx="1026.7" cy="119.8" r="8.0" fill="#c9a21c"/><circle cx="1026.7" cy="119.8" r="4.8" fill="#d0c4ff"/><circle cx="1053.2" cy="119.4" r="8.5" fill="#c9a21c"/><circle cx="1053.2" cy="119.4" r="5.1" fill="#d0c4ff"/><circle cx="948.9" cy="172.7" r="14.0" fill="#c9a21c"/><circle cx="948.9" cy="172.7" r="8.4" fill="#d0c4ff"/><circle cx="861.3" cy="198.0" r="10.5" fill="#c9a21c"/><circle cx="861.3" cy="198.0" r="6.3" fill="#d0c4ff"/><circle cx="889.7" cy="198.0" r="11.0" fill="#c9a21c"/><circle cx="889.7" cy="198.0" r="6.6" fill="#d0c4ff"/><circle cx="889.7" cy="233.5" r="11.0" fill="#c9a21c"/><circle cx="889.7" cy="233.5" r="6.6" fill="#d0c4ff"/><circle cx="948.9" cy="279.0" r="14.0" fill="#c9a21c"/><circle cx="948.9" cy="279.0" r="8.4" fill="#d0c4ff"/><circle cx="919.7" cy="341.7" r="14.0" fill="#c9a21c"/><circle cx="919.7" cy="341.7" r="8.4" fill="#d0c4ff"/><circle cx="998.0" cy="380.0" r="12.0" fill="#c9a21c"/><circle cx="998.0" cy="380.0" r="7.2" fill="#d0c4ff"/><circle cx="823.0" cy="131.0" r="19.5" fill="#3fa01f"/><circle cx="823.0" cy="131.0" r="16" fill="#4fbfff"/><circle cx="823.0" cy="131.0" r="7" fill="#d0c0ff"/><circle cx="823.0" cy="300.5" r="19.5" fill="#3fa01f"/><circle cx="823.0" cy="300.5" r="16" fill="#4fbfff"/><circle cx="823.0" cy="300.5" r="7" fill="#d0c0ff"/><circle cx="956.7" cy="89.8" r="10.0" fill="#3f9a1a"/><circle cx="956.7" cy="89.8" r="9.0" fill="none" stroke="#c8a81a" stroke-width="2.0" stroke-dasharray="7.1 7.1"/><circle cx="956.7" cy="89.8" r="7.3" fill="#e01818"/><circle cx="956.7" cy="89.8" r="6.0" fill="#1010f0"/><circle cx="865.2" cy="150.2" r="9.0" fill="#3f9a1a"/><circle cx="865.2" cy="150.2" r="8.0" fill="none" stroke="#c8a81a" stroke-width="2.0" stroke-dasharray="6.3 6.3"/><circle cx="865.2" cy="150.2" r="6.3" fill="#e01818"/><circle cx="865.2" cy="150.2" r="5.0" fill="#1010f0"/><circle cx="789.3" cy="198.0" r="9.0" fill="#3f9a1a"/><circle cx="789.3" cy="198.0" r="8.0" fill="none" stroke="#c8a81a" stroke-width="2.0" stroke-dasharray="6.3 6.3"/><circle cx="789.3" cy="198.0" r="6.3" fill="#e01818"/><circle cx="789.3" cy="198.0" r="5.0" fill="#1010f0"/><circle cx="861.3" cy="233.0" r="12.0" fill="#3f9a1a"/><circle cx="861.3" cy="233.0" r="11.0" fill="none" stroke="#c8a81a" stroke-width="2.0" stroke-dasharray="8.6 8.6"/><circle cx="861.3" cy="233.0" r="9.3" fill="#e01818"/><circle cx="861.3" cy="233.0" r="8.0" fill="#1010f0"/><circle cx="865.2" cy="280.2" r="9.0" fill="#3f9a1a"/><circle cx="865.2" cy="280.2" r="8.0" fill="none" stroke="#c8a81a" stroke-width="2.0" stroke-dasharray="6.3 6.3"/><circle cx="865.2" cy="280.2" r="6.3" fill="#e01818"/><circle cx="865.2" cy="280.2" r="5.0" fill="#1010f0"/><circle cx="835.6" cy="325.7" r="9.0" fill="#3f9a1a"/><circle cx="835.6" cy="325.7" r="8.0" fill="none" stroke="#c8a81a" stroke-width="2.0" stroke-dasharray="6.3 6.3"/><circle cx="835.6" cy="325.7" r="6.3" fill="#e01818"/><circle cx="835.6" cy="325.7" r="5.0" fill="#1010f0"/><circle cx="980.8" cy="333.5" r="9.0" fill="#3f9a1a"/><circle cx="980.8" cy="333.5" r="8.0" fill="none" stroke="#c8a81a" stroke-width="2.0" stroke-dasharray="6.3 6.3"/><circle cx="980.8" cy="333.5" r="6.3" fill="#e01818"/><circle cx="980.8" cy="333.5" r="5.0" fill="#1010f0"/><path d="M753.6 175.8l-7 -4v8zM755.6 175.8l7 -4v8zM754.6 174.8l-4 -7h8zM754.6 176.8l-4 7h8z" fill="#3f9a1a"/><circle cx="754.6" cy="175.8" r="4.5" fill="#e01818"/><circle cx="754.6" cy="175.8" r="2.5" fill="#2020f0"/><path d="M757.9 247.9l-7 -4v8zM759.9 247.9l7 -4v8zM758.9 246.9l-4 -7h8zM758.9 248.9l-4 7h8z" fill="#3f9a1a"/><circle cx="758.9" cy="247.9" r="4.5" fill="#e01818"/><circle cx="758.9" cy="247.9" r="2.5" fill="#2020f0"/><path d="M750.1 337.8l-7 -4v8zM752.1 337.8l7 -4v8zM751.1 336.8l-4 -7h8zM751.1 338.8l-4 7h8z" fill="#3f9a1a"/><circle cx="751.1" cy="337.8" r="4.5" fill="#e01818"/><circle cx="751.1" cy="337.8" r="2.5" fill="#2020f0"/><path d="M1018.7 205.4l-7 -4v8zM1020.7 205.4l7 -4v8zM1019.7 204.4l-4 -7h8zM1019.7 206.4l-4 7h8z" fill="#3f9a1a"/><circle cx="1019.7" cy="205.4" r="4.5" fill="#e01818"/><circle cx="1019.7" cy="205.4" r="2.5" fill="#2020f0"/><path d="M1016.8 303.5l-7 -4v8zM1018.8 303.5l7 -4v8zM1017.8 302.5l-4 -7h8zM1017.8 304.5l-4 7h8z" fill="#3f9a1a"/><circle cx="1017.8" cy="303.5" r="4.5" fill="#e01818"/><circle cx="1017.8" cy="303.5" r="2.5" fill="#2020f0"/><circle cx="889.7" cy="154.4" r="5" fill="#3f9a1a"/><circle cx="889.7" cy="154.4" r="3" fill="#d8d0a0"/><circle cx="959.8" cy="311.3" r="5" fill="#3f9a1a"/><circle cx="959.8" cy="311.3" r="3" fill="#d8d0a0"/><circle cx="938.7" cy="326.1" r="5" fill="#3f9a1a"/><circle cx="938.7" cy="326.1" r="3" fill="#d8d0a0"/><circle cx="947.7" cy="333.1" r="5" fill="#3f9a1a"/><circle cx="947.7" cy="333.1" r="3" fill="#d8d0a0"/><path d="M703 318L795 173" stroke="#ff18e0" stroke-width="4.5" stroke-linecap="round"/><path d="M804.5 159L798 187L782 177Z" fill="#ff18e0"/><path d="M713 277L782 299" stroke="#ff18e0" stroke-width="4.5" stroke-linecap="round"/><path d="M802 305L774 307L780 289Z" fill="#ff18e0"/></svg>
</div>
<div class="a" style="left:1117px;top:71px;width:2.5px;height:278px;background:#b4f2e4"></div>
<div class="a" style="left:1119.5px;top:71px;width:37px;height:278px;background:#3a9a84"></div>
<div class="a" style="left:1121px;top:71px;width:34px;height:34px;background:#9ddcdc;border:3px solid;border-color:#b4f2e4 #2a7a64 #2a7a64 #b4f2e4;outline:1px solid #0a2a20"></div><div class="a" style="left:1127px;top:77px;width:22px;height:22px;border:1px solid #000"></div><svg class="a" style="left:1123px;top:73px" width="30" height="30" viewBox="0 0 38 38"><rect x="10" y="13" width="14" height="14" stroke="#000" fill="none" stroke-width="1.8"/><rect x="20" y="9" width="8" height="8" fill="#9ddcdc" stroke="#000" stroke-width="1.2"/><path d="M13 20H20M13 20L16 17M13 20L16 23" stroke="#000" fill="none" stroke-width="1.4"/><rect x="23" y="11" width="3" height="3" stroke="#000" fill="none" stroke-width=".8"/></svg>
<div class="a" style="left:1121px;top:106px;width:34px;height:34px;background:#9ddcdc;border:3px solid;border-color:#b4f2e4 #2a7a64 #2a7a64 #b4f2e4;outline:1px solid #0a2a20"></div><div class="a" style="left:1127px;top:112px;width:22px;height:22px;border:1px solid #000"></div><svg class="a" style="left:1123px;top:108px" width="30" height="30" viewBox="0 0 38 38"><rect x="12.4" y="13.4" width="15.2" height="14.2" stroke="#000" fill="none" stroke-width="1.8"/><path d="M20.5 5.8L26 10.8H23.8V16.8H17.2V10.8H15Z" fill="#000"/></svg>
<div class="a" style="left:1121px;top:141px;width:34px;height:34px;background:#9ddcdc;border:3px solid;border-color:#b4f2e4 #2a7a64 #2a7a64 #b4f2e4;outline:1px solid #0a2a20"></div><div class="a" style="left:1127px;top:147px;width:22px;height:22px;border:1px solid #000"></div><svg class="a" style="left:1123px;top:143px" width="30" height="30" viewBox="0 0 38 38"><rect x="12.6" y="11.4" width="15.4" height="14.8" stroke="#000" fill="none" stroke-width="1.8"/><path d="M20 32.2L14.3 27.3H16.6V21.5H23.4V27.3H25.7Z" fill="#000"/></svg>
<div class="a" style="left:1121px;top:176px;width:34px;height:34px;background:#9ddcdc;border:3px solid;border-color:#b4f2e4 #2a7a64 #2a7a64 #b4f2e4;outline:1px solid #0a2a20"></div><div class="a" style="left:1127px;top:182px;width:22px;height:22px;border:1px solid #000"></div><svg class="a" style="left:1123px;top:178px" width="30" height="30" viewBox="0 0 38 38"><path d="M16 11.8H29V26.8H14.5V22.5" stroke="#000" fill="none" stroke-width="1.8"/><path d="M14.5 15V11.8H16" stroke="#000" fill="none" stroke-width="1.8"/><path d="M6.3 18.6L12 13.2V15.8H17.2V21.4H12V24Z" fill="#000"/></svg>
<div class="a" style="left:1121px;top:211px;width:34px;height:34px;background:#9ddcdc;border:3px solid;border-color:#b4f2e4 #2a7a64 #2a7a64 #b4f2e4;outline:1px solid #0a2a20"></div><div class="a" style="left:1127px;top:217px;width:22px;height:22px;border:1px solid #000"></div><svg class="a" style="left:1123px;top:213px" width="30" height="30" viewBox="0 0 38 38"><path d="M24.8 15V11.8H10.2V26.8H24.8V22.5" stroke="#000" fill="none" stroke-width="1.8"/><path d="M32.4 18.6L26.7 13.2V15.8H21.6V21.4H26.7V24Z" fill="#000"/></svg>
<div class="a cy" style="left:576px;top:350px;width:580px;height:29px;border:2px solid;border-color:#e4f7f7 #3f7777 #3f7777 #e4f7f7;outline:1px solid #2a5a5a"></div>
<div class="a mono" style="left:576px;top:357px;width:580px;text-align:center;font-size:13.5px;line-height:15px;letter-spacing:0.3px">Close</div>
<div class="a" style="left:567px;top:567px;width:347px;height:124px;background:#fff"></div>
<div class="a" style="left:572px;top:575.5px;width:340px;font:600 23.5px/24px 'Liberation Serif','Noto Serif CJK SC',serif;color:#e81010;letter-spacing:1.4px">此两处请确认内层负片是导通<br>还是隔离</div>
<div class="a" id="xl" style="left:1048px;top:225px;width:560px;height:583px;background:#c2d8f0;border:1px solid #6a8ab0;border-top:2px solid #7f9cc4;border-radius:7px 0 0 7px;overflow:hidden">
<div class="a" style="left:0px;top:0px;width:560px;height:29px;background:linear-gradient(90deg,rgba(255,255,255,0),rgba(255,255,255,.45) 70%),linear-gradient(#e3eefb,#cfe0f6 60%,#c4daf6)"></div>
<div class="a" style="left:332px;top:6px;white-space:nowrap;font:12px/16px 'Liberation Sans','Noto Sans CJK SC',sans-serif;color:#6a7c94;letter-spacing:0.1px">4V2PE044A0-预审指示.xls&nbsp; [兼容模式] -</div>
<div class="a" style="left:0px;top:29px;width:560px;height:27px;background:#bfdbff"></div>
<div class="a" style="left:41px;top:4px;width:105px;height:22px;background:linear-gradient(#e4eefb,#c8daf0);border:1px solid #a0b8d8;border-radius:0 11px 11px 0"></div>
<svg class="a" style="left:51px;top:5px" width="110" height="20"><rect x="3" y="3" width="12" height="12" fill="#2a3a9a" stroke="#182070"/><rect x="5" y="3" width="7" height="5" fill="#fff"/><rect x="6" y="10" width="6" height="5" fill="#c8d0f0"/><path d="M26 8C30 4 36 7 34 13" fill="none" stroke="#3a5ac8" stroke-width="2.4"/><path d="M23 4V11H30Z" fill="#3a5ac8"/><path d="M41 8L46 8L43.5 11Z" fill="#5a6a8a"/><path d="M66 8C62 4 56 7 58 13" fill="none" stroke="#a8b4c8" stroke-width="2.4"/><path d="M69 4V11H62Z" fill="#a8b4c8"/><path d="M74 8L79 8L76.5 11Z" fill="#a0a8b8"/><path d="M100 6H106" stroke="#3a4a6a"/><path d="M100 9L106 9L103 12Z" fill="#3a4a6a"/></svg>
<div class="a" style="left:5px;top:6px;width:37px;height:37px;border-radius:50%;background:radial-gradient(circle at 50% 35%,#fff,#e8eef8 45%,#b8c8e0 75%,#8aa0c0);border:1px solid #8098b8;box-shadow:0 1px 2px #6078a0"></div>
<svg class="a" style="left:12px;top:13px" width="24" height="24"><rect x="2" y="2" width="9" height="9" rx="2" fill="none" stroke="#e85a10" stroke-width="2.6"/><rect x="13" y="4" width="8" height="8" rx="2" fill="none" stroke="#f0b010" stroke-width="2.4"/><rect x="3" y="13" width="8" height="8" rx="2" fill="none" stroke="#f0a010" stroke-width="2.4"/><rect x="13" y="13" width="8" height="8" rx="2" fill="none" stroke="#58a838" stroke-width="2.4"/><rect x="9" y="9" width="6" height="6" fill="#5890d8"/></svg>
<div class="a" style="left:50px;top:30px;width:46px;height:27px;background:linear-gradient(#f4f8fd,#e0ebf8);border:1px solid #8db2e3;border-bottom:none;border-radius:4px 4px 0 0"></div>
<div class="a" style="left:61px;top:34px;white-space:nowrap;font:12px/17px 'Liberation Sans','Noto Sans CJK SC',sans-serif;color:#1e3c6e">开始</div>
<div class="a" style="left:114px;top:34px;white-space:nowrap;font:12px/17px 'Liberation Sans','Noto Sans CJK SC',sans-serif;color:#1e3c6e">插入</div>
<div class="a" style="left:167px;top:34px;white-space:nowrap;font:12px/17px 'Liberation Sans','Noto Sans CJK SC',sans-serif;color:#1e3c6e">页面布局</div>
<div class="a" style="left:244px;top:34px;white-space:nowrap;font:12px/17px 'Liberation Sans','Noto Sans CJK SC',sans-serif;color:#1e3c6e">公式</div>
<div class="a" style="left:297px;top:34px;white-space:nowrap;font:12px/17px 'Liberation Sans','Noto Sans CJK SC',sans-serif;color:#1e3c6e">数据</div>
<div class="a" style="left:350px;top:34px;white-space:nowrap;font:12px/17px 'Liberation Sans','Noto Sans CJK SC',sans-serif;color:#1e3c6e">审阅</div>
<div class="a" style="left:403px;top:34px;white-space:nowrap;font:12px/17px 'Liberation Sans','Noto Sans CJK SC',sans-serif;color:#1e3c6e">视图</div>
<div class="a" style="left:456px;top:34px;white-space:nowrap;font:12px/17px 'Liberation Sans','Noto Sans CJK SC',sans-serif;color:#1e3c6e">Acrobat</div>
<div class="a" style="left:2px;top:54.5px;width:560px;height:105.5px;background:linear-gradient(#dfeaf8,#d3e2f5 20%,#c6d9f1 60%,#d6e5f7);border:1px solid #8db2e3;border-radius:4px 0 0 4px"></div>
<div class="a" style="left:6px;top:57.5px;width:70px;height:99.5px;border:1px solid #a8c4e8;border-radius:3px;background:linear-gradient(#dde9f8,#cfe0f4 75%,#c1d7f0 76%,#c1d7f0)"></div>
<div class="a" style="left:7px;top:140px;width:68px;height:16px;background:#c1d8f1"></div>
<div class="a" style="left:81px;top:57.5px;width:232px;height:99.5px;border:1px solid #a8c4e8;border-radius:3px;background:linear-gradient(#dde9f8,#cfe0f4 75%,#c1d7f0 76%,#c1d7f0)"></div>
<div class="a" style="left:82px;top:140px;width:230px;height:16px;background:#c1d8f1"></div>
<div class="a" style="left:318px;top:57.5px;width:163px;height:99.5px;border:1px solid #a8c4e8;border-radius:3px;background:linear-gradient(#dde9f8,#cfe0f4 75%,#c1d7f0 76%,#c1d7f0)"></div>
<div class="a" style="left:319px;top:140px;width:161px;height:16px;background:#c1d8f1"></div>
<div class="a" style="left:486px;top:57.5px;width:80px;height:99.5px;border:1px solid #a8c4e8;border-radius:3px;background:linear-gradient(#dde9f8,#cfe0f4 75%,#c1d7f0 76%,#c1d7f0)"></div>
<div class="a" style="left:487px;top:140px;width:78px;height:16px;background:#c1d8f1"></div>
<div class="a" style="left:3px;top:140px;white-space:nowrap;width:60px;text-align:center;font:11.5px/15px 'Liberation Sans','Noto Sans CJK SC',sans-serif;color:#3e6aaa">剪贴板</div>
<div class="a" style="left:158px;top:140px;white-space:nowrap;width:60px;text-align:center;font:11.5px/15px 'Liberation Sans','Noto Sans CJK SC',sans-serif;color:#3e6aaa">字体</div>
<div class="a" style="left:360px;top:140px;white-space:nowrap;width:60px;text-align:center;font:11.5px/15px 'Liberation Sans','Noto Sans CJK SC',sans-serif;color:#3e6aaa">对齐方式</div>
<div class="a" style="left:518px;top:140px;white-space:nowrap;width:60px;text-align:center;font:11.5px/15px 'Liberation Sans','Noto Sans CJK SC',sans-serif;color:#3e6aaa">数字</div>
<div class="a" style="left:68px;top:144px;width:6px;height:6px;border-left:1px solid #6080b0;border-top:1px solid #6080b0"></div>
<div class="a" style="left:71px;top:147px;width:3px;height:3px;background:#6080b0"></div>
<div class="a" style="left:305px;top:144px;width:6px;height:6px;border-left:1px solid #6080b0;border-top:1px solid #6080b0"></div>
<div class="a" style="left:308px;top:147px;width:3px;height:3px;background:#6080b0"></div>
<div class="a" style="left:473px;top:144px;width:6px;height:6px;border-left:1px solid #6080b0;border-top:1px solid #6080b0"></div>
<div class="a" style="left:476px;top:147px;width:3px;height:3px;background:#6080b0"></div>
<svg class="a" style="left:9px;top:61px" width="70" height="70"><rect x="8" y="6" width="20" height="24" rx="2" fill="#e8c070" stroke="#a07828"/><rect x="13" y="3" width="10" height="6" rx="1" fill="#b8b8b8" stroke="#707070"/><path d="M17 13H32L37 18V36H17Z" fill="#fff" stroke="#8898b0"/><path d="M20 20H33M20 24H33M20 28H33M20 32H33" stroke="#b0b8c8"/><path d="M47 3L53 14M55 3L49 14" stroke="#4a5a8a" stroke-width="1.4"/><circle cx="48" cy="16" r="2" fill="none" stroke="#3a4ab0" stroke-width="1.4"/><circle cx="54" cy="16" r="2" fill="none" stroke="#3a4ab0" stroke-width="1.4"/><rect x="45" y="25" width="8" height="10" fill="#fff" stroke="#5070b0"/><rect x="49" y="28" width="8" height="10" fill="#fff" stroke="#5070b0"/><path d="M51 31H55M51 34H55" stroke="#5070b0"/><path d="M55 46L49 54" stroke="#c89838" stroke-width="3"/><path d="M45 52L50 57L47 61L43 58Z" fill="#f0d060" stroke="#806018" stroke-width=".7"/></svg>
<div class="a" style="left:16px;top:97px;white-space:nowrap;font:12px/16px 'Liberation Sans','Noto Sans CJK SC',sans-serif;color:#1e3c6e">粘贴</div>
<svg class="a" style="left:25px;top:121px" width="8" height="5"><path d="M1 1L7 1L4 4Z" fill="#4a5a7a"/></svg>
<div class="a" style="left:85px;top:70px;width:129px;height:24px;background:#fff;border:1px solid #a8c0e0"></div>
<div class="a" style="left:88px;top:73px;white-space:nowrap;font:12px/17px 'Liberation Sans','Noto Sans CJK SC',sans-serif">宋体</div>
<svg class="a" style="left:203px;top:80px" width="8" height="5"><path d="M1 1L7 1L4 4Z" fill="#4a5a7a"/></svg>
<div class="a" style="left:215px;top:70px;width:47px;height:24px;background:#fff;border:1px solid #a8c0e0"></div>
<div class="a" style="left:218px;top:73px;white-space:nowrap;font:12px/17px 'Liberation Sans','Noto Sans CJK SC',sans-serif">10</div>
<svg class="a" style="left:250px;top:80px" width="8" height="5"><path d="M1 1L7 1L4 4Z" fill="#4a5a7a"/></svg>
<div class="a" style="left:266px;top:70px;width:44px;height:24px;background:linear-gradient(#e4eefb,#c8daf0);border:1px solid #a0b8d8;border-radius:3px"></div>
<div class="a" style="left:288px;top:71px;width:1px;height:22px;background:#a0b8d8"></div>
<div class="a" style="left:270px;top:71px;white-space:nowrap;font:bold 17px/22px 'Liberation Serif','Noto Serif CJK SC',serif;color:#2a3a5a">A</div>
<div class="a" style="left:293px;top:74px;white-space:nowrap;font:bold 13px/20px 'Liberation Serif','Noto Serif CJK SC',serif;color:#2a3a5a">A</div>
<svg class="a" style="left:280px;top:72px" width="30" height="8"><path d="M1 5L3.5 1L6 5Z" fill="#3a5ab0"/><path d="M21 1L26 1L23.5 5Z" fill="#3a5ab0"/></svg>
<div class="a" style="left:84px;top:105px;width:80px;height:22px;background:linear-gradient(#e4eefb,#c8daf0);border:1px solid #a0b8d8;border-radius:3px"></div>
<div class="a" style="left:84px;top:105px;width:23px;height:22px;background:linear-gradient(#ffe3a0,#ffc45c 50%,#ffb63c 51%,#ffd47c);border:1px solid #c29b48;border-radius:3px 0 0 3px"></div>
<div class="a" style="left:90px;top:107px;white-space:nowrap;font:bold 14px/18px 'Liberation Serif','Noto Serif CJK SC',serif">B</div>
<div class="a" style="left:115px;top:107px;white-space:nowrap;font:italic 14px/18px 'Liberation Serif','Noto Serif CJK SC',serif">I</div>
<div class="a" style="left:136px;top:107px;white-space:nowrap;font:bold 13px/18px 'Liberation Serif','Noto Serif CJK SC',serif"><u>U</u></div>
<div class="a" style="left:107px;top:106px;width:1px;height:20px;background:#a0b8d8"></div>
<div class="a" style="left:130px;top:106px;width:1px;height:20px;background:#a0b8d8"></div>
<svg class="a" style="left:154px;top:114px" width="8" height="5"><path d="M1 1L6 1L3.5 4Z" fill="#4a5a7a"/></svg>
<div class="a" style="left:168px;top:105px;width:33px;height:22px;background:linear-gradient(#e4eefb,#c8daf0);border:1px solid #a0b8d8;border-radius:3px"></div>
<div class="a" style="left:173px;top:109px;width:13px;height:13px;border:1px dotted #7080a0;border-bottom:2px solid #404860"></div>
<svg class="a" style="left:192px;top:114px" width="8" height="5"><path d="M1 1L6 1L3.5 4Z" fill="#4a5a7a"/></svg>
<div class="a" style="left:206px;top:105px;width:65px;height:22px;background:linear-gradient(#e4eefb,#c8daf0);border:1px solid #a0b8d8;border-radius:3px"></div>
<div class="a" style="left:238px;top:106px;width:1px;height:20px;background:#a0b8d8"></div>
<svg class="a" style="left:207px;top:106px" width="64" height="20"><path d="M5 8L11 3L16 9L9 13Z" fill="#f4f4f8" stroke="#5a6a8a"/><path d="M15 8C18 10 18 13 17 13" stroke="#3a6ac8" fill="none" stroke-width="1.3"/><rect x="3" y="14" width="16" height="4" fill="#ffef10"/><path d="M23 8L28 8L25.5 11Z" fill="#4a5a7a"/><text x="36" y="13" font-family="Liberation Serif,serif" font-weight="bold" font-size="15" fill="#2a3a5a">A</text><rect x="35" y="14" width="16" height="4" fill="#e81010"/><path d="M55 8L60 8L57.5 11Z" fill="#4a5a7a"/></svg>
<div class="a" style="left:276px;top:105px;width:34px;height:22px;background:linear-gradient(#e4eefb,#c8daf0);border:1px solid #a0b8d8;border-radius:3px"></div>
<div class="a" style="left:279px;top:103px;white-space:nowrap;font:8px/9px 'Liberation Sans','Noto Sans CJK SC',sans-serif;color:#2a3a5a">wén</div>
<div class="a" style="left:280px;top:111px;white-space:nowrap;font:12px/14px 'Liberation Sans','Noto Sans CJK SC',sans-serif;color:#2a50b0">文</div>
<svg class="a" style="left:300px;top:114px" width="8" height="5"><path d="M1 1L6 1L3.5 4Z" fill="#4a5a7a"/></svg>
<div class="a" style="left:321px;top:71px;width:69px;height:22px;background:linear-gradient(#e4eefb,#c8daf0);border:1px solid #a0b8d8;border-radius:3px"></div>
<div class="a" style="left:344px;top:71px;width:23px;height:22px;background:linear-gradient(#ffe3a0,#ffc45c 50%,#ffb63c 51%,#ffd47c);border:1px solid #c29b48"></div>
<svg class="a" style="left:325px;top:73px" width="18" height="16"><rect x="0" y="2" width="14" height="1.7" fill="#202838"/><rect x="2" y="5" width="10" height="1.7" fill="#202838"/><rect x="0" y="8" width="14" height="1.7" fill="#202838"/></svg>
<svg class="a" style="left:348px;top:77px" width="18" height="16"><rect x="0" y="2" width="14" height="1.7" fill="#202838"/><rect x="2" y="5" width="10" height="1.7" fill="#202838"/><rect x="0" y="8" width="14" height="1.7" fill="#202838"/></svg>
<svg class="a" style="left:371px;top:81px" width="18" height="16"><rect x="0" y="2" width="14" height="1.7" fill="#202838"/><rect x="2" y="5" width="10" height="1.7" fill="#202838"/><rect x="0" y="8" width="14" height="1.7" fill="#202838"/></svg>
<div class="a" style="left:393px;top:71px;width:32px;height:22px;background:linear-gradient(#e4eefb,#c8daf0);border:1px solid #a0b8d8;border-radius:3px"></div>
<svg class="a" style="left:395px;top:73px" width="30" height="18"><path d="M4 12L12 4M7 14L15 6M5 7L9 11" stroke="#303850" stroke-width="1.4"/><path d="M10 14L17 12" stroke="#3a5ab0" stroke-width="1.2"/><path d="M21 7L26 7L23.5 10Z" fill="#4a5a7a"/></svg>
<div class="a" style="left:446px;top:71px;width:22px;height:22px;background:linear-gradient(#ffe3a0,#ffc45c 50%,#ffb63c 51%,#ffd47c);border:1px solid #c29b48;border-radius:3px"></div>
<svg class="a" style="left:448px;top:73px" width="18" height="18"><rect x="2" y="2" width="14" height="14" fill="#fff" stroke="#6a7a9a" stroke-width=".8"/><path d="M4 5H13M4 8H11M4 11H13M4 14H9" stroke="#303850"/><path d="M13 8V11H10" stroke="#3a5ab0" fill="none"/></svg>
<div class="a" style="left:321px;top:105px;width:69px;height:22px;background:linear-gradient(#e4eefb,#c8daf0);border:1px solid #a0b8d8;border-radius:3px"></div>
<div class="a" style="left:321px;top:105px;width:23px;height:22px;background:linear-gradient(#ffe3a0,#ffc45c 50%,#ffb63c 51%,#ffd47c);border:1px solid #c29b48;border-radius:3px 0 0 3px"></div>
<svg class="a" style="left:325px;top:108px" width="18" height="16"><rect x="0" y="2" width="14" height="1.7" fill="#202838"/><rect x="0" y="5" width="9" height="1.7" fill="#202838"/><rect x="0" y="8" width="14" height="1.7" fill="#202838"/><rect x="0" y="11" width="9" height="1.7" fill="#202838"/></svg>
<svg class="a" style="left:348px;top:108px" width="18" height="16"><rect x="0" y="2" width="14" height="1.7" fill="#202838"/><rect x="2" y="5" width="10" height="1.7" fill="#202838"/><rect x="0" y="8" width="14" height="1.7" fill="#202838"/><rect x="2" y="11" width="10" height="1.7" fill="#202838"/></svg>
<svg class="a" style="left:371px;top:108px" width="18" height="16"><rect x="0" y="2" width="14" height="1.7" fill="#202838"/><rect x="5" y="5" width="9" height="1.7" fill="#202838"/><rect x="0" y="8" width="14" height="1.7" fill="#202838"/><rect x="5" y="11" width="9" height="1.7" fill="#202838"/></svg>
<div class="a" style="left:393px;top:105px;width:45px;height:22px;background:linear-gradient(#e4eefb,#c8daf0);border:1px solid #a0b8d8;border-radius:3px"></div>
<div class="a" style="left:415px;top:106px;width:1px;height:20px;background:#a0b8d8"></div>
<svg class="a" style="left:398px;top:108px" width="18" height="16"><rect x="0" y="2" width="14" height="1.7" fill="#202838"/><rect x="5" y="5" width="9" height="1.7" fill="#202838"/><rect x="5" y="8" width="9" height="1.7" fill="#202838"/><rect x="0" y="11" width="14" height="1.7" fill="#202838"/></svg>
<svg class="a" style="left:420px;top:108px" width="18" height="16"><rect x="0" y="2" width="14" height="1.7" fill="#202838"/><rect x="5" y="5" width="9" height="1.7" fill="#202838"/><rect x="5" y="8" width="9" height="1.7" fill="#202838"/><rect x="0" y="11" width="14" height="1.7" fill="#202838"/></svg>
<svg class="a" style="left:396px;top:110px" width="40" height="12"><path d="M5 4L1 6.5L5 9Z" fill="#3a5ab0"/><path d="M23 4L27 6.5L23 9Z" fill="#3a5ab0"/></svg>
<div class="a" style="left:446px;top:105px;width:32px;height:22px;background:linear-gradient(#ffe3a0,#ffc45c 50%,#ffb63c 51%,#ffd47c);border:1px solid #c29b48;border-radius:3px"></div>
<svg class="a" style="left:448px;top:107px" width="30" height="18"><rect x="2" y="2" width="15" height="14" fill="#fff" stroke="#6a7a9a"/><path d="M2 6H17M2 12H17" stroke="#6a7a9a"/><path d="M5 9H14M5 9L7 7.5M5 9L7 10.5M14 9L12 7.5M14 9L12 10.5" stroke="#3a5ab0" fill="none" stroke-width=".9"/><text x="7.5" y="11" font-size="5" font-family="Liberation Sans,sans-serif">a</text><path d="M21 7L26 7L23.5 10Z" fill="#4a5a7a"/></svg>
<div class="a" style="left:441px;top:65px;width:1px;height:70px;background:#a8c4e8"></div>
<div class="a" style="left:489px;top:70px;width:70px;height:24px;background:#fff;border:1px solid #a8c0e0"></div>
<div class="a" style="left:492px;top:73px;white-space:nowrap;font:12px/17px 'Liberation Sans','Noto Sans CJK SC',sans-serif">常规</div>
<div class="a" style="left:489px;top:105px;width:70px;height:22px;background:linear-gradient(#e4eefb,#c8daf0);border:1px solid #a0b8d8;border-radius:3px"></div>
<svg class="a" style="left:492px;top:107px" width="30" height="18"><rect x="2" y="3" width="12" height="8" fill="#5a8ad8" stroke="#2a4a90"/><ellipse cx="11" cy="13" rx="4" ry="2" fill="#f0c040" stroke="#907018" stroke-width=".6"/><ellipse cx="11" cy="11" rx="4" ry="2" fill="#f0c040" stroke="#907018" stroke-width=".6"/><path d="M21 7L26 7L23.5 10Z" fill="#4a5a7a"/></svg>
<div class="a" style="left:529px;top:108px;white-space:nowrap;font:13px/17px 'Liberation Sans','Noto Sans CJK SC',sans-serif;color:#2a3a5a">%</div>
<div class="a" style="left:521px;top:106px;width:1px;height:20px;background:#a0b8d8"></div>
<div class="a" style="left:0px;top:160px;width:560px;height:45px;background:#cddef3"></div>
<div class="a" style="left:4.5px;top:167.5px;width:560px;height:32px;background:linear-gradient(#fbfdff,#e9f0fa);border:1px solid #b4c8e4"></div>
<svg class="a" style="left:7px;top:175px" width="16" height="18"><path d="M8 1C10 3 13 3 15 3C15 10 12 15 8 17C4 15 1 10 1 3C3 3 6 3 8 1Z" fill="#f09020" stroke="#a06010"/><path d="M8 3C9.5 4.5 11.5 4.5 13 4.5C13 10 11 13.5 8 15Z" fill="#ffd080"/></svg>
<div class="a" style="left:33px;top:176px;white-space:nowrap;font:bold 11.5px/15px 'Liberation Sans','Noto Sans CJK SC',sans-serif;color:#1e3c6e">安全警告</div>
<div class="a" style="left:93px;top:176px;white-space:nowrap;font:11.5px/15px 'Liberation Sans','Noto Sans CJK SC',sans-serif;color:#1e3c6e">部分活动内容已被禁用。</div>
<div class="a" style="left:235px;top:174px;width:70px;height:20px;background:#fff;border:1px solid #a8b8d0;text-align:center;font:11.5px/17px 'Liberation Sans','Noto Sans CJK SC',sans-serif;color:#1e3c6e">选项...</div>
<div class="a" style="left:0px;top:204px;width:560px;height:24px;background:#c6d9f1"></div>
<div class="a" style="left:2px;top:206px;width:160px;height:19px;background:#fff;border:1px solid #a8c0e0"></div>
<div class="a" style="left:59px;top:208px;white-space:nowrap;font:13px/16px 'Liberation Mono',monospace">C11</div>
<svg class="a" style="left:146px;top:213px" width="9" height="6"><path d="M0 0L8 0L4 5Z" fill="#000"/></svg>
<div class="a" style="left:161px;top:207px;width:78px;height:17px;background:linear-gradient(#dfe8f4,#c4d4ea);border:1px solid #a8bcd8;border-radius:9px 0 0 9px"></div>
<div class="a" style="left:166px;top:211px;width:7px;height:7px;border-radius:50%;background:radial-gradient(#fff,#a0b0c8)"></div>
<div class="a" style="left:220px;top:207px;white-space:nowrap;font:bold 13px/16px 'Liberation Serif','Noto Serif CJK SC',serif;color:#5a6a80"><i>f</i><span style="font-size:9px">x</span></div>
<div class="a" style="left:239px;top:206px;width:330px;height:19px;background:#fff;border:1px solid #a8c0e0"></div>
<div class="a" style="left:248px;top:207px;white-space:nowrap;font:14px/18px 'Liberation Mono','Noto Serif CJK SC',serif;letter-spacing:0.85px">如图的孔按pth孔制作，加正常的焊盘和开窗</div>
<div class="a" style="left:2px;top:229px;width:560px;height:313px;background:#fff"></div>
<div class="a" style="left:2px;top:229px;width:34px;height:19px;background:#b8cde6;border-right:1px solid #9eb6ce;border-bottom:1px solid #9eb6ce"></div>
<svg class="a" style="left:19px;top:233px" width="14" height="13"><path d="M13 0V12H1Z" fill="#dfe8f5"/></svg>
<div class="a" style="left:36px;top:229px;width:58px;height:19px;background:linear-gradient(#f6f9fd,#dfe8f5);border-right:1px solid #9eb6ce;border-bottom:1px solid #9eb6ce;text-align:center;font:14px/20px 'Liberation Serif','Noto Serif CJK SC',serif;color:#27413e;">A</div>
<div class="a" style="left:94px;top:229px;width:37px;height:19px;background:linear-gradient(#f6f9fd,#dfe8f5);border-right:1px solid #9eb6ce;border-bottom:1px solid #9eb6ce;text-align:center;font:14px/20px 'Liberation Serif','Noto Serif CJK SC',serif;color:#27413e;">B</div>
<div class="a" style="left:131px;top:229px;width:166px;height:19px;background:linear-gradient(#f9d99f,#f1c15f);border-right:1px solid #d0a050;border-bottom:1px solid #c89840;text-align:center;font:14px/20px 'Liberation Serif','Noto Serif CJK SC',serif;color:#27413e;">C</div>
<div class="a" style="left:297px;top:229px;width:31px;height:19px;background:linear-gradient(#f9d99f,#f1c15f);border-right:1px solid #d0a050;border-bottom:1px solid #c89840;text-align:center;font:14px/20px 'Liberation Serif','Noto Serif CJK SC',serif;color:#27413e;">D</div>
<div class="a" style="left:328px;top:229px;width:81px;height:19px;background:linear-gradient(#f9d99f,#f1c15f);border-right:1px solid #d0a050;border-bottom:1px solid #c89840;text-align:center;font:14px/20px 'Liberation Serif','Noto Serif CJK SC',serif;color:#27413e;">E</div>
<div class="a" style="left:409px;top:229px;width:54px;height:19px;background:linear-gradient(#f9d99f,#f1c15f);border-right:1px solid #d0a050;border-bottom:1px solid #c89840;text-align:center;font:14px/20px 'Liberation Serif','Noto Serif CJK SC',serif;color:#27413e;">F</div>
<div class="a" style="left:463px;top:229px;width:49px;height:19px;background:linear-gradient(#f9d99f,#f1c15f);border-right:1px solid #d0a050;border-bottom:1px solid #c89840;text-align:center;font:14px/20px 'Liberation Serif','Noto Serif CJK SC',serif;color:#27413e;">G</div>
<div class="a" style="left:512px;top:229px;width:60px;height:19px;background:linear-gradient(#f9d99f,#f1c15f);border-right:1px solid #d0a050;border-bottom:1px solid #c89840;text-align:center;font:14px/20px 'Liberation Serif','Noto Serif CJK SC',serif;color:#27413e;"></div>
<div class="a" style="left:2px;top:249px;width:34px;height:43px;background:#e4ecf7;border-bottom:1px solid #9eb6ce;border-right:1px solid #9eb6ce;"></div>
<div class="a" style="left:2px;top:276px;white-space:nowrap;width:33px;text-align:center;font:14px/18px 'Liberation Serif','Noto Serif CJK SC',serif;color:#27413e">7</div>
<div class="a" style="left:2px;top:292px;width:34px;height:40px;background:#e4ecf7;border-bottom:1px solid #9eb6ce;border-right:1px solid #9eb6ce;"></div>
<div class="a" style="left:2px;top:316px;white-space:nowrap;width:33px;text-align:center;font:14px/18px 'Liberation Serif','Noto Serif CJK SC',serif;color:#27413e">8</div>
<div class="a" style="left:2px;top:332px;width:34px;height:40px;background:#e4ecf7;border-bottom:1px solid #9eb6ce;border-right:1px solid #9eb6ce;"></div>
<div class="a" style="left:2px;top:356px;white-space:nowrap;width:33px;text-align:center;font:14px/18px 'Liberation Serif','Noto Serif CJK SC',serif;color:#27413e">9</div>
<div class="a" style="left:2px;top:372px;width:34px;height:40px;background:#e4ecf7;border-bottom:1px solid #9eb6ce;border-right:1px solid #9eb6ce;"></div>
<div class="a" style="left:2px;top:396px;white-space:nowrap;width:33px;text-align:center;font:14px/18px 'Liberation Serif','Noto Serif CJK SC',serif;color:#27413e">10</div>
<div class="a" style="left:2px;top:412px;width:34px;height:40px;background:linear-gradient(90deg,#f9d99f,#f1c15f);border-bottom:1px solid #c89840;border-right:1px solid #c89840;"></div>
<div class="a" style="left:2px;top:436px;white-space:nowrap;width:33px;text-align:center;font:14px/18px 'Liberation Serif','Noto Serif CJK SC',serif;color:#27413e">11</div>
<div class="a" style="left:2px;top:452px;width:34px;height:40px;background:#e4ecf7;border-bottom:1px solid #9eb6ce;border-right:1px solid #9eb6ce;"></div>
<div class="a" style="left:2px;top:476px;white-space:nowrap;width:33px;text-align:center;font:14px/18px 'Liberation Serif','Noto Serif CJK SC',serif;color:#27413e">12</div>
<div class="a" style="left:2px;top:492px;width:34px;height:40px;background:#e4ecf7;border-bottom:1px solid #9eb6ce;border-right:1px solid #9eb6ce;"></div>
<div class="a" style="left:2px;top:516px;white-space:nowrap;width:33px;text-align:center;font:14px/18px 'Liberation Serif','Noto Serif CJK SC',serif;color:#27413e">13</div>
<div class="a" style="left:2px;top:532px;width:34px;height:12px;background:#e4ecf7;border-bottom:1px solid #9eb6ce;border-right:1px solid #9eb6ce;"></div>
<div class="a" style="left:36px;top:292px;width:530px;height:1.3px;background:#000"></div>
<div class="a" style="left:93px;top:332px;width:480px;height:1.3px;background:#000"></div>
<div class="a" style="left:93px;top:372px;width:480px;height:1.3px;background:#000"></div>
<div class="a" style="left:93px;top:412px;width:480px;height:1.3px;background:#000"></div>
<div class="a" style="left:93px;top:452px;width:480px;height:1.3px;background:#000"></div>
<div class="a" style="left:93px;top:492px;width:480px;height:1.3px;background:#000"></div>
<div class="a" style="left:93px;top:532px;width:480px;height:1.3px;background:#000"></div>
<div class="a" style="left:36px;top:249px;width:1px;height:300px;background:#c8d4e4"></div>
<div class="a" style="left:92.8px;top:292px;width:1.3px;height:260px;background:#000"></div>
<div class="a" style="left:129.7px;top:249px;width:1.5px;height:300px;background:#000"></div>
<div class="a" style="left:36px;top:252.5px;white-space:nowrap;width:95px;text-align:center;font:bold 16.5px/19px 'Liberation Serif','Noto Serif CJK SC',serif">工艺流程<br>指示</div>
<div class="a" style="left:36px;top:418px;width:58px;height:40px;overflow:hidden"><div class="a" style="left:0;top:-7px;width:58px;text-align:center;font:bold 16.5px/21px 'Liberation Serif','Noto Serif CJK SC',serif"><span style="font:bold 13px/21px 'Liberation Mono',monospace;position:relative;top:1px">CAM</span><br>指示</div></div>
<div class="a" style="left:93.5px;top:303px;white-space:nowrap;width:35px;text-align:center;font:bold 15px/20px 'Liberation Serif','Noto Serif CJK SC',serif">1</div>
<div class="a" style="left:93.5px;top:343px;white-space:nowrap;width:35px;text-align:center;font:bold 15px/20px 'Liberation Serif','Noto Serif CJK SC',serif">2</div>
<div class="a" style="left:93.5px;top:383px;white-space:nowrap;width:35px;text-align:center;font:bold 15px/20px 'Liberation Serif','Noto Serif CJK SC',serif">3</div>
<div class="a" style="left:93.5px;top:423px;white-space:nowrap;width:35px;text-align:center;font:bold 15px/20px 'Liberation Serif','Noto Serif CJK SC',serif">4</div>
<div class="a" style="left:93.5px;top:463px;white-space:nowrap;width:35px;text-align:center;font:bold 15px/20px 'Liberation Serif','Noto Serif CJK SC',serif">5</div>
<div class="a" style="left:93.5px;top:503px;white-space:nowrap;width:35px;text-align:center;font:bold 15px/20px 'Liberation Serif','Noto Serif CJK SC',serif">6</div>
<div class="a" style="left:134px;top:304px;white-space:nowrap;font:bold 13px/16px 'Liberation Serif','Noto Serif CJK SC',serif;letter-spacing:1px">如图点亮的边倒角，倒角参数见dd层</div>
<div class="a" style="left:134px;top:344px;white-space:nowrap;font:bold 13px/16px 'Liberation Serif','Noto Serif CJK SC',serif;letter-spacing:1px">此板无金手指</div>
<div class="a" style="left:134px;top:384px;white-space:nowrap;font:bold 13px/16px 'Liberation Serif','Noto Serif CJK SC',serif;letter-spacing:1px">外层完成铜厚1oz</div>
<div class="a" style="left:134px;top:424px;white-space:nowrap;font:bold 13px/16px 'Liberation Serif','Noto Serif CJK SC',serif;letter-spacing:1px">如图的孔按pth孔制作，加正常的焊盘和开窗</div>
<div class="a" style="left:132px;top:414px;width:430px;height:37px;border:1px solid #000;border-right:none"></div>
<div class="a" style="left:101.5px;top:408.5px;width:371px;height:46px;border:4px solid #ee1414;box-shadow:2px 2px 3px rgba(60,0,0,.7), inset 2px 2px 3px rgba(60,0,0,.5)"></div>
<div class="a" style="left:2px;top:542px;width:560px;height:16px;background:#c3d6ee;border-top:1px solid #8aa4c8"></div>
<svg class="a" style="left:5px;top:544px" width="56" height="12" fill="#2a4a9a"><path d="M2 2V10H3.5V2ZM9 2L4 6L9 10ZM22 2L17 6L22 10ZM30 2L35 6L30 10ZM43 2L48 6L43 10ZM48.5 2V10H50V2Z"/></svg>
<svg class="a" style="left:59px;top:542px" width="500" height="16"><path d="M0 0H50L44 15H6Z" fill="#fff" stroke="#8aa4c8"/><path d="M122 15L130 1" stroke="#8aa4c8" fill="none"/><path d="M200 15L208 1" stroke="#8aa4c8" fill="none"/><path d="M278 15L286 1" stroke="#8aa4c8" fill="none"/><path d="M356 15L364 1" stroke="#8aa4c8" fill="none"/><path d="M434 15L442 1" stroke="#8aa4c8" fill="none"/><path d="M512 15L520 1" stroke="#8aa4c8" fill="none"/></svg>
<div class="a" style="left:70px;top:542px;white-space:nowrap;font:12.5px/16px 'Liberation Serif','Noto Serif CJK SC',serif;color:#1e3c6e">指示</div>
<div class="a" style="left:111px;top:542px;white-space:nowrap;font:12.5px/16px 'Liberation Mono','Noto Serif CJK SC',serif;color:#2a4a9a;letter-spacing:-0.6px">图1(fig1)</div>
<div class="a" style="left:189.2px;top:542px;white-space:nowrap;font:12.5px/16px 'Liberation Mono','Noto Serif CJK SC',serif;color:#2a4a9a;letter-spacing:-0.6px">图2(fig2)</div>
<div class="a" style="left:267.4px;top:542px;white-space:nowrap;font:12.5px/16px 'Liberation Mono','Noto Serif CJK SC',serif;color:#2a4a9a;letter-spacing:-0.6px">图3(fig3)</div>
<div class="a" style="left:345.6px;top:542px;white-space:nowrap;font:12.5px/16px 'Liberation Mono','Noto Serif CJK SC',serif;color:#2a4a9a;letter-spacing:-0.6px">图4(fig4)</div>
<div class="a" style="left:423.8px;top:542px;white-space:nowrap;font:12.5px/16px 'Liberation Mono','Noto Serif CJK SC',serif;color:#2a4a9a;letter-spacing:-0.6px">图5(fig5)</div>
<div class="a" style="left:502px;top:542px;white-space:nowrap;font:12.5px/16px 'Liberation Mono','Noto Serif CJK SC',serif;color:#2a4a9a;letter-spacing:-0.6px">图6(fig6)</div>
<div class="a" style="left:0px;top:558px;width:560px;height:24px;background:linear-gradient(#d9e6f7,#c4d7ee 50%,#b4cbe8);border-top:1px solid #8aa4c8"></div>
<div class="a" style="left:9px;top:562px;white-space:nowrap;font:11.5px/15px 'Liberation Sans','Noto Sans CJK SC',sans-serif;color:#1e3c6e">就绪</div>
<div class="a" style="left:41px;top:561px;width:1px;height:18px;background:#9ab4d8"></div>
</div>
<svg class="a" style="left:910px;top:620px" width="250" height="50" viewBox="910 620 250 50"><path d="M915 630L1135 657" stroke="#ff18e0" stroke-width="4.2" stroke-linecap="round"/><path d="M1153 660L1126 666L1128 648Z" fill="#ff18e0"/></svg>
<div class="a" style="left:0;top:822px;width:1599px;height:77px;background:#d4d0c8;border-top:1px solid #fff"></div>
<div class="tb" style="left:2px;top:828px;width:46px;height:22px;padding-left:18px;font:12px/19px 'Noto Sans CJK SC',sans-serif"><i style="left:2px;top:3px;width:14px;height:13px;background:conic-gradient(from 0deg,#3a8ae0 0 25%,#f0b020 0 50%,#3aa83a 0 75%,#e04a2a 0);transform:skewX(-8deg) rotate(-8deg);border-radius:2px"></i>开始</div>
<div class="a" style="left:106px;top:830px;width:2px;height:66px;border-left:1px solid #808080;border-right:1px solid #fff"></div>
<svg class="a" style="left:67px;top:854px" width="18" height="18"><circle cx="5.5" cy="5.5" r="4.5" fill="#7ac040"/><circle cx="12.5" cy="5.5" r="4.5" fill="#58a8f0"/><circle cx="5.5" cy="12.5" r="4.5" fill="#f0b020"/><circle cx="12.5" cy="12.5" r="4.5" fill="#f06060"/></svg>
<svg class="a" style="left:123px;top:831px" width="18" height="16"><path d="M5 1L16 1L11 6L1 6Z" fill="#48b848"/><path d="M1 6L11 6L16 11L6 11Z" fill="#38a0e8"/><path d="M16 11L6 11L1 15L11 15Z" fill="#38a0e8" opacity=".8"/></svg>
<svg class="a" style="left:311px;top:830px" width="18" height="18"><circle cx="9" cy="9" r="7" fill="#48c048"/><text x="4.5" y="13.5" font-family="Liberation Sans,sans-serif" font-weight="bold" font-size="13" fill="#fff">e</text><path d="M1 12C3 5 12 1 17 3" stroke="#a0e060" fill="none" stroke-width="1.3"/></svg>
<div class="tb" style="left:150px;top:829px;width:152px"><i style="background:#e8f0ff;border:1px solid #4a78c8;width:11px;left:5px"><b style="position:absolute;left:1px;top:1px;width:7px;height:3px;background:#7aa8e8"></b><b style="position:absolute;left:1px;top:6px;width:7px;height:5px;background:repeating-linear-gradient(90deg,#4a78c8 0 1px,transparent 1px 3px)"></b></i><span style="font-size:12px">计算器</span></div>
<div class="tb" style="left:338px;top:829px;width:151px"><i style="font:italic bold 15px/14px 'Liberation Sans',sans-serif;color:#1a9a3a;left:4px">P</i><span style="font-size:12px">工程系统</span>&nbsp; <span style="font-size:12px">版本：</span>1.1...</div>
<div class="tb" style="left:493px;top:829px;width:151px"><i style="background:#1a3ab8;border:1px solid #001070;width:14px"><b style="position:absolute;left:2px;top:0;width:8px;height:5px;background:#fff"></b><b style="position:absolute;left:3px;top:8px;width:6px;height:4px;background:#e03030"></b></i>Total Commander 7.0 p...</div>
<div class="tb" style="left:646px;top:829px;width:153px"><i style="font:15px/14px 'DejaVu Sans',sans-serif;color:#e89010;top:1px">★</i><span style="font-size:12px">兴森快捷衡阳分公司</span>...</div>
<div class="tb" style="left:801px;top:829px;width:151px"><i style="background:#fff;border:1px solid #3868b0;width:12px;left:5px"><b style="position:absolute;left:1px;top:2px;width:8px;height:9px;background:repeating-linear-gradient(#3868b0 0 1px,transparent 1px 3px)"></b></i><span style="font-size:12px">制作规范</span> (Ver:1.0.6)</div>
<div class="tb" style="left:953px;top:829px;width:151px"><i style="background:#2a8a9a;border:1px solid #104858;border-radius:50%;width:14px"><b style="position:absolute;left:3px;top:3px;width:6px;height:6px;background:#b8e8f0;border-radius:50%"></b></i>get.exe</div>
<div class="tb" style="left:1108px;top:829px;width:150px"><i class="gx" style="position:absolute"></i>Engineering Toolkit 9.0...</div>
<div class="tb" style="left:1260px;top:829px;width:151px"><i class="gx" style="position:absolute"></i>Progress</div>
<div class="tb" style="left:116px;top:852px;width:158px;height:21px;line-height:19px"><i class="gx" style="position:absolute"></i>Graphic Editor 9.07b2 (0...</div>
<div class="tb" style="left:276px;top:852px;width:159px;height:21px;line-height:19px;background:#0a246a;color:#fff;border-color:#404040 #fff #fff #404040"><i class="gx" style="position:absolute"></i>Dialog Box</div>
<div class="tb" style="left:438px;top:852px;width:160px;height:21px;line-height:19px"><i style="background:#2a9a8a;border-radius:50% 50% 40% 40%;width:16px;height:10px;top:5px"><b style="position:absolute;left:5px;top:2px;width:5px;height:5px;background:#c8f0e8;border-radius:50%"></b></i>CAM_Guide v2.74</div>
<div class="tb" style="left:601px;top:852px;width:158px;height:21px;line-height:19px"><i style="background:#d8ecff;border:1px solid #6a8ab8;width:11px;left:5px"><b style="position:absolute;left:1px;top:2px;width:7px;height:9px;background:repeating-linear-gradient(#8aa8d0 0 1px,transparent 1px 3px)"></b></i>4v2kt0hba0.txt - <span style="font-size:12px">记事本</span></div>
<div class="tb" style="left:762px;top:852px;width:158px;height:21px;line-height:19px;background:#fff;font-weight:bold;border-color:#404040 #fff #fff #404040"><i style="background:#fff;border:1px solid #607080;width:14px"><b style="position:absolute;left:1px;top:2px;width:8px;height:9px;background:#2a9a4a;font:bold 8px/9px 'Liberation Sans',sans-serif;color:#fff;text-align:center">x</b></i>4V2PE044A0-<span style="font-size:12px">预审指</span>...</div>
<div class="tb" style="left:922px;top:852px;width:159px;height:21px;line-height:19px"><i style="background:#fff;border:1px solid #607080;width:14px"><b style="position:absolute;left:1px;top:2px;width:8px;height:9px;background:#2a9a4a;font:bold 8px/9px 'Liberation Sans',sans-serif;color:#fff;text-align:center">x</b></i>4V2PE044A0<span style="font-size:12px">制作单</span>.xls ...</div>
<div class="tb" style="left:1084px;top:852px;width:160px;height:21px;line-height:19px"><i style="background:#fff;border:1px solid #607080;width:14px"><b style="position:absolute;left:1px;top:2px;width:9px;height:9px;background:#2a5ab8;font:bold 7px/9px 'Liberation Sans',sans-serif;color:#fff;text-align:center">W</b></i>4v2pe044a0-Impedance ...</div>
<div class="a" style="left:1421px;top:830px;width:2px;height:66px;border-left:1px solid #808080;border-right:1px solid #fff"></div>
<div class="a" style="left:1452px;top:828px;width:146px;height:70px;border:1px solid;border-color:#808080 #fff #fff #808080"></div>
<div class="a" style="left:1536px;top:838px;font:11.3px/13px 'Liberation Sans',sans-serif">20:34</div>
<div class="a" style="left:1532px;top:855px;font:11.5px/14px 'Noto Sans CJK SC',sans-serif">星期一</div>
<div class="a" style="left:1522.5px;top:876px;font:11px/13px 'Liberation Sans',sans-serif;letter-spacing:0.05px">2016/12/19</div>
<svg class="a" style="left:1457px;top:832px" width="10" height="12"><path d="M1.5 5L4.5 2L7.5 5M1.5 9.5L4.5 6.5L7.5 9.5" stroke="#000" stroke-width="1.5" fill="none"/></svg>
<svg class="a" style="left:1430px;top:829px" width="20" height="46"><rect x="2" y="6" width="14" height="9" rx="1" fill="#b8b8b8" stroke="#888"/><path d="M4 9H14M4 12H14" stroke="#888"/><rect x="4" y="27" width="6" height="5" fill="none" stroke="#000"/><rect x="6" y="25" width="6" height="5" fill="#d4d0c8" stroke="#000"/><path d="M5 38L11 38L8 42Z" fill="#000"/></svg>
<svg class="a" style="left:1474px;top:829px" width="50" height="68"><rect x="6" y="4" width="9" height="12" rx="1" fill="#e8e8e8" stroke="#333"/><path d="M15 6C19 6 19 14 15 14" fill="none" stroke="#333" stroke-width="1.5"/><rect x="26" y="3" width="10" height="8" fill="#e8e8e8" stroke="#333"/><rect x="31" y="9" width="8" height="9" fill="#fff" stroke="#333"/><path d="M6 26L17 24L15 29L5 31Z" fill="#2a8ae0"/><path d="M4 33L14 31L11 37L2 38Z" fill="#2a8ae0"/><path d="M27 27L31 25V37L27 35Z" fill="#aaa" stroke="#666"/><path d="M34 27C37 30 37 33 34 36" fill="none" stroke="#888"/><path d="M1 62L12 49L10 57L6 62Z" fill="#f01010"/><path d="M10 57L17 62L13 62Z" fill="#20c020"/><text x="26" y="63" font-family="Liberation Sans,sans-serif" font-weight="bold" font-style="italic" font-size="20" fill="#d83018">G</text></svg>
<div class="a" style="left:1581px;top:857px;width:15px;height:11px;background:#2a5ad8;border:1px solid #88a;border-bottom:3px solid #bbb"></div>
</body></html>
